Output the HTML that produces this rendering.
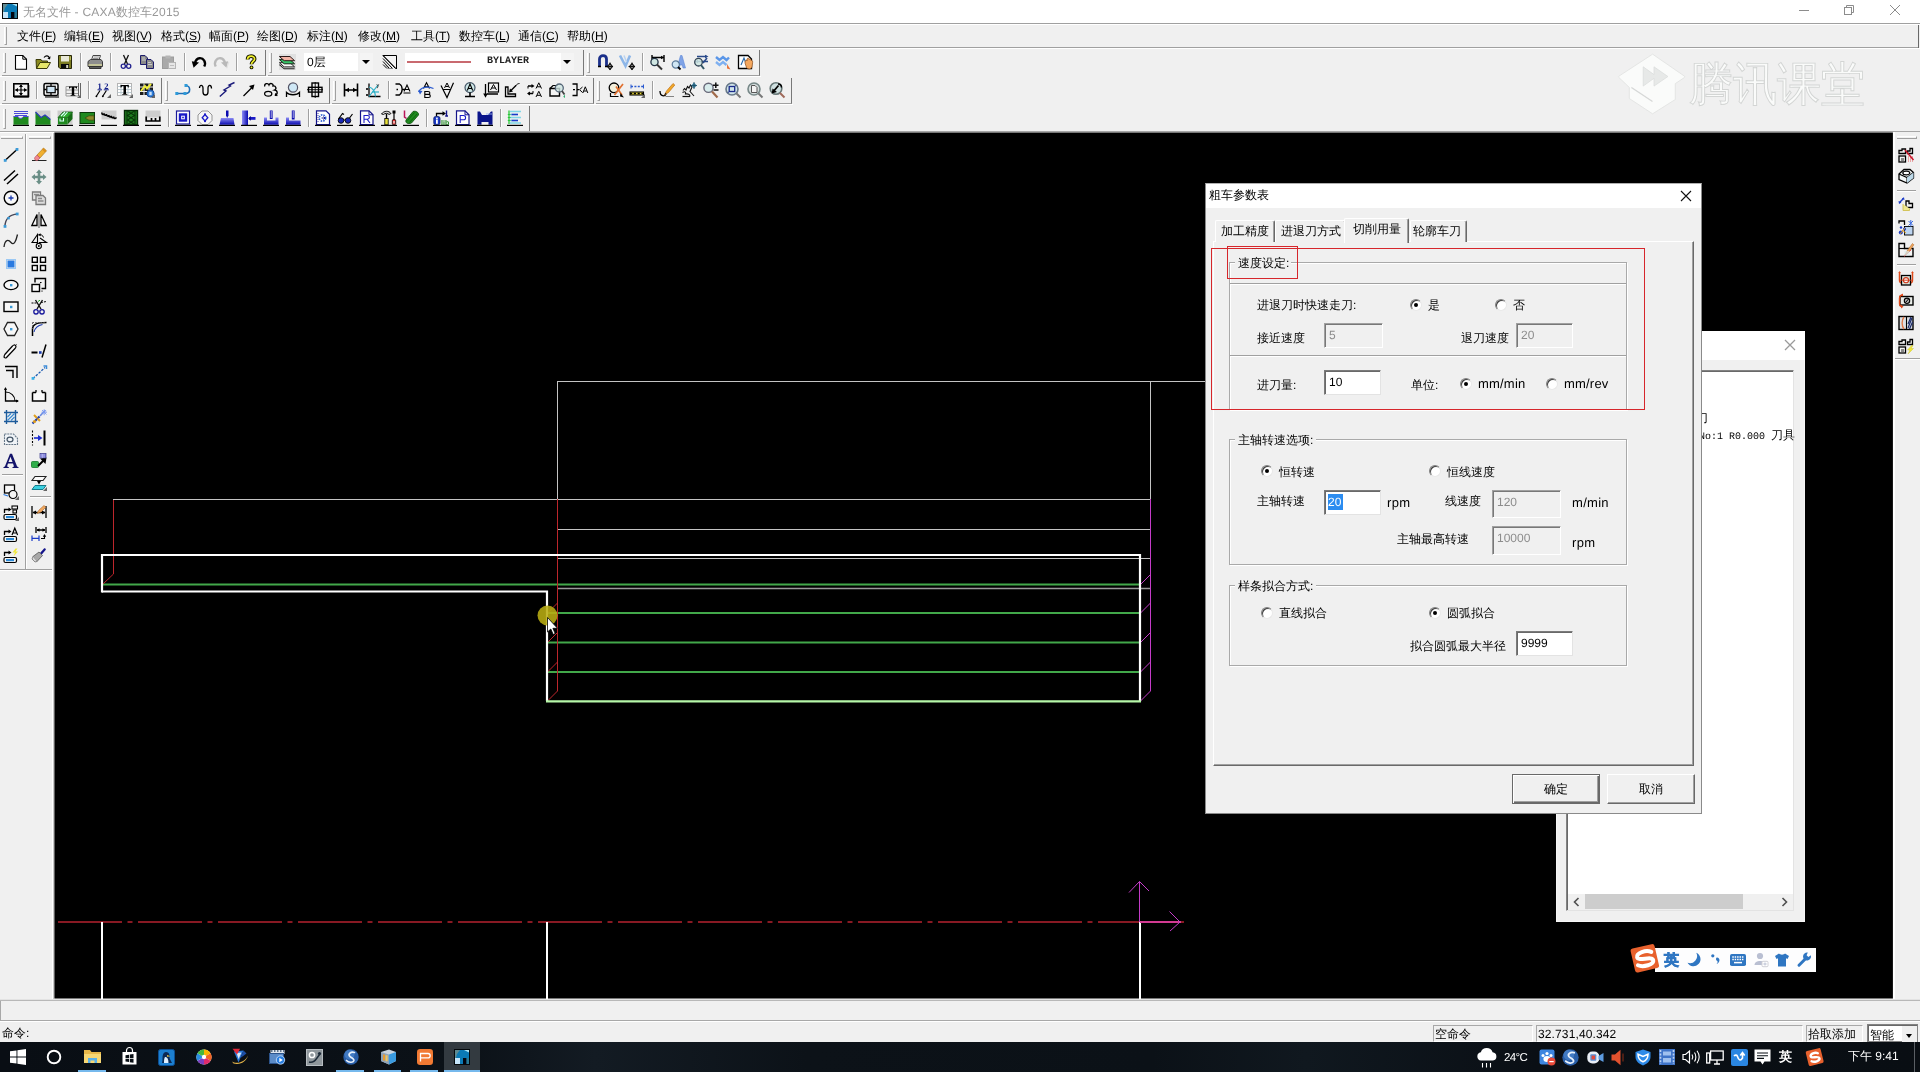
<!DOCTYPE html>
<html><head><meta charset="utf-8"><title>CAXA</title><style>
*{box-sizing:border-box;margin:0;padding:0}
html,body{width:1920px;height:1072px;overflow:hidden;background:#f0f0f0;font-family:"Liberation Sans",sans-serif;font-size:12px;color:#000;line-height:1}
body{position:relative;-webkit-font-smoothing:antialiased;text-rendering:geometricPrecision}
#root{position:absolute;left:0;top:0;width:1920px;height:1072px;will-change:transform}
.a{position:absolute}
.t{position:absolute;white-space:nowrap;line-height:12px;font-size:12px}
svg{position:absolute;overflow:visible}
.ic{position:absolute;width:16px;height:16px}
.vs{position:absolute;width:2px;border-left:1px solid #a0a0a0;border-right:1px solid #fff}
.hs{position:absolute;height:2px;border-top:1px solid #a0a0a0;border-bottom:1px solid #fff}
.grip{position:absolute;width:3px;border-left:1px solid #fff;border-right:1px solid #a0a0a0;border-bottom:1px solid #a0a0a0}
.gripH{position:absolute;height:3px;border-top:1px solid #fff;border-bottom:1px solid #a0a0a0;border-right:1px solid #a0a0a0}
.u{text-decoration:underline}
i{display:inline-block;width:1em;text-align:center;font-style:normal;line-height:inherit}
.edit{position:absolute;background:#fff;border:1px solid #7a7a7a;border-right-color:#e3e3e3;border-bottom-color:#e3e3e3;box-shadow:inset 1px 1px 0 #696969}
.edit.dis{background:#f0f0f0;border-color:#a0a0a0 #fff #fff #a0a0a0;box-shadow:inset 1px 1px 0 #787878}
.grp{position:absolute;border:1px solid #a9a9a9;box-shadow:inset 1px 1px 0 #fff,1px 1px 0 #fff}
.rad{position:absolute;width:12px;height:12px;border-radius:50%;background:#fff;border:1px solid #808080;border-right-color:#e8e8e8;border-bottom-color:#e8e8e8;box-shadow:inset 1px 1px 0 #404040}
.rad.on:after{content:"";position:absolute;left:3px;top:3px;width:4px;height:4px;border-radius:50%;background:#000}
.btn{position:absolute;background:#f0f0f0;border:1px solid #fff;border-right-color:#696969;border-bottom-color:#696969;box-shadow:inset -1px -1px 0 #a0a0a0;text-align:center;font-size:12px}
</style></head><body><div id="root">
<div class="a" style="left:0;top:0;width:1920px;height:24px;background:#fff"></div>
<svg style="left:2px;top:3px" width="16" height="16" viewBox="0 0 16 16"><rect x="0" y="0" width="16" height="16" fill="#05090c"/><rect x="1" y="1" width="14" height="14" fill="#0a7ab6"/><path d="M1 1H6L3 5L2 9H1Z" fill="#5f8a92"/><path d="M10 1H15V3.5Z" fill="#a8e4f6"/><rect x="1" y="9" width="5" height="6" fill="#c6e6fb"/><rect x="9" y="9" width="3.6" height="6" fill="#03060f"/><rect x="12.6" y="9" width="2.4" height="6" fill="#2a7a96"/></svg>
<div class="t" style="left:23px;top:6px;color:#999;letter-spacing:0.25px"><i>无</i><i>名</i><i>文</i><i>件</i> - CAXA<i>数</i><i>控</i><i>车</i>2015</div>
<div class="a" style="left:1799px;top:10px;width:10px;height:1px;background:#8c8c8c"></div>
<svg style="left:1844px;top:5px" width="10" height="10" viewBox="0 0 10 10" fill="none" stroke="#8c8c8c" stroke-width="1"><path d="M2.5 2.5V0.5H9.5V7.5H7.5"/><rect x="0.5" y="2.5" width="7" height="7"/></svg>
<svg style="left:1890px;top:5px" width="10" height="10" viewBox="0 0 10 10" fill="none" stroke="#8c8c8c" stroke-width="1"><path d="M0 0L10 10M10 0L0 10"/></svg>
<div class="a" style="left:0;top:23px;width:1920px;height:1px;background:#a0a0a0"></div>
<div class="a" style="left:0;top:24px;width:1920px;height:1px;background:#fff"></div>
<div class="a" style="left:0;top:47px;width:1918px;height:1px;background:#a0a0a0"></div>
<div class="a" style="left:0;top:48px;width:1920px;height:1px;background:#fff"></div>
<div class="a" style="left:1918px;top:25px;width:1px;height:23px;background:#696969"></div>
<div class="grip" style="left:4px;top:27px;height:18px"></div>
<div class="t" style="left:17px;top:30px"><i>文</i><i>件</i>(<span class="u">F</span>)</div>
<div class="t" style="left:64px;top:30px"><i>编</i><i>辑</i>(<span class="u">E</span>)</div>
<div class="t" style="left:112px;top:30px"><i>视</i><i>图</i>(<span class="u">V</span>)</div>
<div class="t" style="left:161px;top:30px"><i>格</i><i>式</i>(<span class="u">S</span>)</div>
<div class="t" style="left:209px;top:30px"><i>幅</i><i>面</i>(<span class="u">P</span>)</div>
<div class="t" style="left:257px;top:30px"><i>绘</i><i>图</i>(<span class="u">D</span>)</div>
<div class="t" style="left:307px;top:30px"><i>标</i><i>注</i>(<span class="u">N</span>)</div>
<div class="t" style="left:358px;top:30px"><i>修</i><i>改</i>(<span class="u">M</span>)</div>
<div class="t" style="left:411px;top:30px"><i>工</i><i>具</i>(<span class="u">T</span>)</div>
<div class="t" style="left:459px;top:30px"><i>数</i><i>控</i><i>车</i>(<span class="u">L</span>)</div>
<div class="t" style="left:518px;top:30px"><i>通</i><i>信</i>(<span class="u">C</span>)</div>
<div class="t" style="left:567px;top:30px"><i>帮</i><i>助</i>(<span class="u">H</span>)</div>
<div class="a" style="left:0;top:76px;width:761px;height:1px;background:#fff"></div>
<div class="a" style="left:0;top:104px;width:793px;height:1px;background:#fff"></div>
<div class="a" style="left:2px;top:50px;width:264px;height:26px;border-right:1px solid #787878;border-bottom:1px solid #a0a0a0"></div>
<div class="grip" style="left:3px;top:53px;height:20px"></div>
<div class="a" style="left:268px;top:50px;width:316px;height:26px;border-right:1px solid #787878;border-bottom:1px solid #a0a0a0"></div>
<div class="grip" style="left:269px;top:53px;height:20px"></div>
<div class="a" style="left:586px;top:50px;width:174px;height:26px;border-right:1px solid #787878;border-bottom:1px solid #a0a0a0"></div>
<div class="grip" style="left:587px;top:53px;height:20px"></div>
<div class="a" style="left:2px;top:78px;width:160px;height:26px;border-right:1px solid #787878;border-bottom:1px solid #a0a0a0"></div>
<div class="grip" style="left:3px;top:81px;height:20px"></div>
<div class="a" style="left:164px;top:78px;width:166px;height:26px;border-right:1px solid #787878;border-bottom:1px solid #a0a0a0"></div>
<div class="grip" style="left:165px;top:81px;height:20px"></div>
<div class="a" style="left:332px;top:78px;width:262px;height:26px;border-right:1px solid #787878;border-bottom:1px solid #a0a0a0"></div>
<div class="grip" style="left:333px;top:81px;height:20px"></div>
<div class="a" style="left:596px;top:78px;width:196px;height:26px;border-right:1px solid #787878;border-bottom:1px solid #a0a0a0"></div>
<div class="grip" style="left:597px;top:81px;height:20px"></div>
<div class="a" style="left:2px;top:106px;width:528px;height:26px;border-right:1px solid #787878;border-bottom:1px solid #a0a0a0"></div>
<div class="grip" style="left:3px;top:109px;height:20px"></div>
<div class="vs" style="left:80px;top:53px;height:18px"></div>
<div class="vs" style="left:110px;top:53px;height:18px"></div>
<div class="vs" style="left:184px;top:53px;height:18px"></div>
<div class="vs" style="left:236px;top:53px;height:18px"></div>
<div class="vs" style="left:642px;top:53px;height:18px"></div>
<div class="vs" style="left:36px;top:81px;height:18px"></div>
<div class="vs" style="left:88px;top:81px;height:18px"></div>
<div class="vs" style="left:388px;top:81px;height:18px"></div>
<div class="vs" style="left:652px;top:81px;height:18px"></div>
<div class="vs" style="left:168px;top:109px;height:18px"></div>
<div class="vs" style="left:308px;top:109px;height:18px"></div>
<div class="vs" style="left:426px;top:109px;height:18px"></div>
<div class="vs" style="left:500px;top:109px;height:18px"></div>
<div class="a" style="left:279px;top:54px;width:17px;height:16px;background:#e0e0e0"></div>
<div class="a" style="left:304px;top:53px;width:54px;height:18px;background:#fff"></div>
<div class="t" style="left:307px;top:56px;">0<i>层</i></div>
<div class="a" style="left:360px;top:53px;width:13px;height:18px;background:#f4f4f4"></div>
<div class="a" style="left:362px;top:60px;width:0;height:0;border-left:4px solid transparent;border-right:4px solid transparent;border-top:4px solid #000"></div>
<div class="a" style="left:405px;top:53px;width:156px;height:18px;background:#fff"></div>
<div class="a" style="left:407px;top:61px;width:64px;height:1.5px;background:#c9696f"></div>
<div class="t" style="left:487px;top:56px;font-family:'Liberation Mono',monospace;font-size:10px;line-height:12px;font-weight:bold;color:#222">BYLAYER</div>
<div class="a" style="left:561px;top:53px;width:13px;height:18px;background:#f4f4f4"></div>
<div class="a" style="left:563px;top:60px;width:0;height:0;border-left:4px solid transparent;border-right:4px solid transparent;border-top:4px solid #000"></div>
<div class="a" style="left:0;top:131px;width:1920px;height:1px;background:#a6a6a6"></div>
<div class="a" style="left:0;top:132px;width:54px;height:1px;background:#fff"></div>
<div class="gripH" style="left:1px;top:136px;width:22px"></div>
<div class="gripH" style="left:29px;top:136px;width:22px"></div>
<div class="vs" style="left:25px;top:134px;height:436px"></div>
<div class="a" style="left:0;top:569px;width:53px;height:1px;background:#a0a0a0"></div>
<div class="a" style="left:0;top:570px;width:53px;height:1px;background:#fff"></div>
<div class="a" style="left:52px;top:133px;width:1px;height:866px;background:#fff"></div>
<div class="a" style="left:53px;top:133px;width:1px;height:866px;background:#c8c8c8"></div>
<div class="hs" style="left:2px;top:474px;width:21px"></div>
<div class="hs" style="left:30px;top:496px;width:21px"></div>
<div class="a" style="left:1893px;top:132px;width:2px;height:867px;background:#fff"></div>
<div class="gripH" style="left:1897px;top:136px;width:20px"></div>
<div class="hs" style="left:1897px;top:190px;width:19px"></div>
<div class="hs" style="left:1897px;top:264px;width:19px"></div>
<div class="a" style="left:1895px;top:358px;width:25px;height:1px;background:#a0a0a0"></div>
<div class="a" style="left:1895px;top:359px;width:25px;height:1px;background:#fff"></div>
<svg style="left:1610px;top:48px" width="90" height="72" viewBox="1610 48 90 72"><path d="M1652.6 54.2L1684.5 76.2Q1685.3 76.9 1684.3 77.6L1675.3 83.6V99.5L1652.6 113.8L1629.3 98.5V87.4L1618.9 77.5Q1618 76.8 1619 76.1Z" fill="#fafbfa" stroke="#dfe1df" stroke-width="0.8" stroke-linejoin="round"/><path d="M1643.2 66.8V86.1L1654 78.3V86.1L1667.9 76.5L1654 66.8V74.6Z" fill="#e7e9e8" stroke="#d9dbda" stroke-width="0.7"/><path d="M1631.5 87.3L1652.6 101.4" stroke="#d6d8d7" stroke-width="1.6"/><path d="M1631.9 86.6L1653 100.7" stroke="#fff" stroke-width="0.6"/></svg>
<div class="t" style="left:1689px;top:58px;font-size:44px;line-height:52px;letter-spacing:0.6px;font-weight:300;color:#fafbfa;-webkit-text-stroke:0.9px #d3d5d4;transform:scaleY(1.06);transform-origin:0 0"><i>腾</i><i>讯</i><i>课</i><i>堂</i></div>
<svg class="ic" style="left:13.0px;top:54.3px" viewBox="0 0 16 16"><path d="M2.5 1.5H9.8L13.5 5.2V15.2H2.5Z" fill="#fff" stroke="#000" stroke-width="1.1"/><path d="M9.8 1.5V5.2H13.5" fill="none" stroke="#000" stroke-width="1"/></svg>
<svg class="ic" style="left:34.5px;top:54.3px" viewBox="0 0 16 16"><path d="M1 5.5H6L7 7H12.5V9H5L1.5 14.5Z" fill="#8a8a1e" stroke="#3a3a08"/><path d="M1.5 14.5L5 8.5H15.5L12 14.5Z" fill="#e6e66a" stroke="#3a3a08"/><path d="M9 3.5C11 1 13.5 1.5 14.5 4" fill="none" stroke="#000" stroke-width="1.2"/><path d="M15.6 2.2L15 5.6L12.4 4.4Z" fill="#000"/></svg>
<svg class="ic" style="left:57.0px;top:54.3px" viewBox="0 0 16 16"><path d="M1.5 1.5H14.5V14.5H3L1.5 13Z" fill="#7d7d22" stroke="#26260a"/><rect x="4" y="2" width="8" height="5.5" fill="#e9e9d8"/><rect x="4" y="10" width="8" height="4.5" fill="#0a0a0a"/><rect x="9.2" y="11" width="2" height="3" fill="#d8d8c0"/><path d="M13.3 2.5V6" stroke="#c8c86a"/></svg>
<svg class="ic" style="left:87.0px;top:54.3px" viewBox="0 0 16 16"><path d="M4.5 6L6 1.5H13.5L12 6Z" fill="#fff" stroke="#444"/><path d="M1 7.5L3.5 5.5H14L15.5 7.5V12.5H1Z" fill="#8d8d8d" stroke="#3a3a3a"/><path d="M1.5 11H15" stroke="#e8e8a0" stroke-width="1.2"/><path d="M2.5 12.5H14V14.5H2.5Z" fill="#5a5a5a" stroke="#333"/><path d="M6.5 3H12M6 4.5H11.5" stroke="#777" stroke-width="0.8"/></svg>
<svg class="ic" style="left:117.5px;top:54.3px" viewBox="0 0 16 16"><path d="M5.5 1L9.5 10M10.5 1L6.5 10" stroke="#111" stroke-width="1.3" fill="none"/><circle cx="5.3" cy="12.3" r="2.1" fill="none" stroke="#22228e" stroke-width="1.3"/><circle cx="10.7" cy="12.3" r="2.1" fill="none" stroke="#22228e" stroke-width="1.3"/></svg>
<svg class="ic" style="left:138.5px;top:54.3px" viewBox="0 0 16 16"><path d="M1.5 1.5H6L8.5 4V10.5H1.5Z" fill="#8a8a8a" stroke="#1c1c6a"/><path d="M7.5 5.5H12L14.5 8V14.5H7.5Z" fill="#8a8a8a" stroke="#1c1c6a"/><path d="M3 4H6M3 6H7M9 8.5H12M9 10.5H13" stroke="#d8d8d8" stroke-width="0.8"/></svg>
<svg class="ic" style="left:161.0px;top:54.3px" viewBox="0 0 16 16"><rect x="1.5" y="3" width="11" height="11.5" fill="#a9a9a9" stroke="#9c9c9c"/><rect x="4.5" y="1.5" width="5" height="3" fill="#b5b5b5"/><rect x="7.5" y="8.5" width="7" height="6" fill="#e6e6e6" stroke="#b4b4b4"/><path d="M9 11.5H13" stroke="#bdbdbd"/></svg>
<svg class="ic" style="left:191.0px;top:54.3px" viewBox="0 0 16 16"><path d="M13.2 12.5C15.5 8 12.5 3.8 8.5 4.2C6 4.5 4.5 6.5 4 9" fill="none" stroke="#000" stroke-width="2.4"/><path d="M0.8 7.2L8 8.6L2.6 13.8Z" fill="#000"/></svg>
<svg class="ic" style="left:213.0px;top:54.3px" viewBox="0 0 16 16"><path d="M2.8 12.5C0.5 8 3.5 3.8 7.5 4.2C10 4.5 11.5 6.5 12 9" fill="none" stroke="#b9b9b9" stroke-width="2.4"/><path d="M15.2 7.2L8 8.6L13.4 13.8Z" fill="#b9b9b9"/><path d="M13.8 14.3L15.8 8" stroke="#dedede" stroke-width="0.9"/></svg>
<svg class="ic" style="left:243.0px;top:54.3px" viewBox="0 0 16 16"><path d="M4.6 5.4C4.6 1.2 11.6 1.2 11.6 4.9C11.6 7.4 8.5 7.4 8.5 10.2" fill="none" stroke="#1a1a00" stroke-width="3.8"/><path d="M4.6 5.4C4.6 1.2 11.6 1.2 11.6 4.9C11.6 7.4 8.5 7.4 8.5 10.2" fill="none" stroke="#f0f02a" stroke-width="1.7"/><circle cx="8.5" cy="13.4" r="1.9" fill="#1a1a00"/><circle cx="8.5" cy="13.4" r="0.9" fill="#f0f02a"/></svg>
<svg class="ic" style="left:279.0px;top:54.3px" viewBox="0 0 16 16"><path d="M0.4 10.6L5.2 14.8H15.6" fill="none" stroke="#222" stroke-width="1.1"/><path d="M0.4 8.7H11L15.6 12.9H5.2Z" fill="#fafafa" stroke="#222" stroke-width="1"/><path d="M0.4 5.6H11L15.6 9.8H5.2Z" fill="#35c468" stroke="#1a2a1a" stroke-width="1"/><path d="M0.4 2.5H11L15.6 6.7H5.2Z" fill="#f3b4a6" stroke="#2a1a1a" stroke-width="1"/></svg>
<svg class="ic" style="left:381.5px;top:54.3px" viewBox="0 0 16 16"><path d="M1 1.5H14.5V15L1 1.5Z" fill="#f4f4f4" stroke="#000"/><path d="M1 1.5L13.5 14.5M1 4.5L10.5 14.5M1 7.5L7.5 14.5M1 10.5L5 14.5" stroke="#000" stroke-width="1"/><path d="M3 11.5L6 14.5H10" stroke="#888" fill="none"/></svg>
<svg class="ic" style="left:597.0px;top:54.3px" viewBox="0 0 16 16"><path d="M2.5 12V5C2.5 0.5 9.5 0.5 9.5 5V12" fill="none" stroke="#1a2f8a" stroke-width="2.8"/><path d="M1 12.5H4M8 12.5H11" stroke="#000" stroke-width="1.3"/><path d="M13 9.5L15.5 12.5L13 15.5L10.5 12.5Z" fill="none" stroke="#000" stroke-width="1.1"/><path d="M13 8.5V16M9.5 12.5H16" stroke="#000" stroke-width="0.9"/></svg>
<svg class="ic" style="left:619.0px;top:54.3px" viewBox="0 0 16 16"><path d="M1 1.5L6.5 12L11 1.5" fill="none" stroke="#8db6e8" stroke-width="2.6"/><path d="M5 1.5L7.5 8" stroke="#b9d3f2" stroke-width="1.5"/><path d="M13 9.5L15.5 12.5L13 15.5L10.5 12.5Z" fill="none" stroke="#000" stroke-width="1.1"/><path d="M13 8.5V16M9.5 12.5H16" stroke="#000" stroke-width="0.9"/></svg>
<svg class="ic" style="left:649.0px;top:54.3px" viewBox="0 0 16 16"><path d="M3 1V6.5M15 1V8M3 3.5H15" stroke="#000" stroke-width="1.4" fill="none"/><path d="M12 1.8L15 3.5L12 5.2Z" fill="#000"/><circle cx="5.5" cy="8" r="3.6" fill="#cfe6e2" stroke="#234" stroke-width="1.3"/><path d="M8 10.5L13 15.5" stroke="#333" stroke-width="2"/></svg>
<svg class="ic" style="left:671.0px;top:54.3px" viewBox="0 0 16 16"><path d="M6 14L9.5 1.5H11L14.5 14H12L11.3 11H8.8L8.2 14Z" fill="#7fa3e6" stroke="#5c86d6" stroke-width="0.6"/><circle cx="4.8" cy="10.5" r="3.6" fill="#cfe6f4" stroke="#5a7a9a" stroke-width="1.2"/><path d="M7 13L9.5 15.5" stroke="#000" stroke-width="1.8"/></svg>
<svg class="ic" style="left:693.0px;top:54.3px" viewBox="0 0 16 16"><path d="M4 2.5H14M4 7.5H15" stroke="#2a4a8a" stroke-width="1.3"/><path d="M12 0.8L15.5 2.5L12 4.2ZM5 5.8L1.5 7.5L5 9.2Z" fill="#2a4a8a"/><circle cx="5.5" cy="8.2" r="3.8" fill="#cfe6e2" fill-opacity="0.85" stroke="#345" stroke-width="1.3"/><path d="M8 11L11 15" stroke="#356" stroke-width="2"/><path d="M10 9L14 4" stroke="#2a4a8a" stroke-width="1.6"/></svg>
<svg class="ic" style="left:715.0px;top:54.3px" viewBox="0 0 16 16"><path d="M1 3L4.5 6L8 3L11.5 6L14 3.5" fill="none" stroke="#5a96e8" stroke-width="2.4"/><path d="M1 8L4.5 11L8 8L11.5 11" fill="none" stroke="#7fb0f0" stroke-width="2.4"/><path d="M12 10L15.5 15.5L12 14.5Z" fill="#e8743a"/></svg>
<svg class="ic" style="left:737.0px;top:54.3px" viewBox="0 0 16 16"><path d="M1.5 1.5H11L14.5 5V14.5H1.5Z" fill="#fff" stroke="#000" stroke-width="1.3"/><path d="M4 11L7 4L8.5 8" fill="none" stroke="#26a" stroke-width="1.1"/><path d="M8 9C8 6 9.5 5.5 10 7V5C10.8 3.5 12 4 12 5.5C13 4.5 14 5 14 6.5C15 6 15.8 7 15.6 8.5L15 13C14.5 15.5 10.5 15.5 9.5 13.5Z" fill="#f4a860" stroke="#8a4a1a" stroke-width="0.7"/></svg>
<svg class="ic" style="left:13.0px;top:82.0px" viewBox="0 0 16 16"><rect x="0.8" y="1.8" width="14.4" height="12.4" fill="#f4f4f4" stroke="#000" stroke-width="1.6"/><path d="M0.8 15.2H15.8V3" stroke="#000" stroke-width="1" fill="none"/><path d="M8 3V13M2.5 8H13.5" stroke="#000" stroke-width="1.2"/><path d="M8 2.2L10 5H6ZM8 13.8L10 11H6ZM1.8 8L5 6V10ZM14.2 8L11 6V10Z" fill="#000"/></svg>
<svg class="ic" style="left:43.0px;top:82.0px" viewBox="0 0 16 16"><rect x="1" y="1.5" width="14" height="12" rx="1.5" fill="#f4f4f4" stroke="#000" stroke-width="1.5"/><rect x="3.8" y="4.3" width="8.4" height="6.4" fill="#cfe4f2" stroke="#000" stroke-width="1.2"/><path d="M8 1.5V4M8 11V13.5M1 7.5H3.5M12.5 7.5H15" stroke="#000" stroke-width="1.3"/><path d="M2 15H14" stroke="#000"/><path d="M16 12V16H12Z" fill="#666"/></svg>
<svg class="ic" style="left:65.0px;top:82.0px" viewBox="0 0 16 16"><path d="M1 4.5H13M1 8H13M1 11.5H13M1 14H13M1 4.5V14" stroke="#9a9a9a" stroke-width="1"/><path d="M13.5 1V14M15.5 1V13" stroke="#555" stroke-width="0.9"/><path d="M4 4.5H12V6.6H11.2C11 5.6 10.5 5.4 9.2 5.4V12.4C9.2 12.9 9.6 13 10.4 13V13.8H5.6V13C6.4 13 6.8 12.9 6.8 12.4V5.4C5.5 5.4 5 5.6 4.8 6.6H4Z" fill="#000"/><path d="M16 12V16H12Z" fill="#666"/></svg>
<svg class="ic" style="left:95.0px;top:82.0px" viewBox="0 0 16 16"><text x="2.6" y="6.6" font-family="Liberation Serif" font-weight="bold" font-size="8.5" fill="#14208a">1</text><text x="9.2" y="6.6" font-family="Liberation Serif" font-weight="bold" font-size="8.5" fill="#14208a">2</text><path d="M2.5 7.8H7M8.8 7.8H13.8" stroke="#14208a" stroke-width="1"/><path d="M1.2 14.5L5 8.5M7.6 14.5L11.4 8.5" stroke="#000" stroke-width="1.2"/><circle cx="1.4" cy="14.3" r="0.9" fill="#000"/><circle cx="7.8" cy="14.3" r="0.9" fill="#000"/><path d="M16 12V16H12Z" fill="#666"/></svg>
<svg class="ic" style="left:117.0px;top:82.0px" viewBox="0 0 16 16"><rect x="0.5" y="1.5" width="14" height="12" fill="#fff" stroke="#b4b4b4"/><path d="M0.5 4.5H14.5M0.5 7.5H14.5M0.5 10.5H14.5M4 1.5V13.5M11 1.5V13.5" stroke="#b4c4cc" stroke-width="0.9"/><path d="M3.5 3H11.8V5.4H11C10.8 4.2 10.3 4 9 4V11.2C9 11.8 9.4 11.9 10.3 11.9V12.8H5.2V11.9C6 11.9 6.5 11.8 6.5 11.2V4C5.2 4 4.6 4.2 4.4 5.4H3.5Z" fill="#000"/><path d="M16 12V16H12Z" fill="#666"/></svg>
<svg class="ic" style="left:139.0px;top:82.0px" viewBox="0 0 16 16"><rect x="1" y="1.5" width="13" height="11.5" fill="#1a1a1a"/><path d="M1 5H14M1 9.5H14M5 1.5V13M10 1.5V13" stroke="#f0f0f0" stroke-width="1"/><path d="M2 9L6 4L8 6.5L12 1.8" fill="none" stroke="#f0ee3a" stroke-width="2"/><circle cx="11.5" cy="11.5" r="3.6" fill="#2f7fd8" stroke="#14489a"/><rect x="10.3" y="9.8" width="2.4" height="3.4" fill="#cfe2f8"/><path d="M16 12V16H12Z" fill="#666"/></svg>
<svg class="ic" style="left:175.0px;top:82.0px" viewBox="0 0 16 16"><path d="M1.5 11.5H10.5C16 11.5 16 3.5 10.5 3.5" fill="none" stroke="#1c6fb8" stroke-width="1.6"/><rect x="0.3" y="10" width="3" height="3" fill="#2f9ad8"/><rect x="8.5" y="10" width="3" height="3" fill="#2f9ad8"/><rect x="9.5" y="2" width="3" height="3" fill="#2f9ad8"/></svg>
<svg class="ic" style="left:197.5px;top:82.0px" viewBox="0 0 16 16"><path d="M1.5 6C1.5 2.5 5 2.5 5 6V10C5 14 10 14 10 10V6C10 2.5 13.5 2.5 13.5 6.5" fill="none" stroke="#000" stroke-width="1.3"/></svg>
<svg class="ic" style="left:219.0px;top:82.0px" viewBox="0 0 16 16"><path d="M0.8 14.5L7 9L5 8L11.5 4L10 3L15.5 0.5" fill="none" stroke="#1a1a7a" stroke-width="1.4"/></svg>
<svg class="ic" style="left:241.0px;top:82.0px" viewBox="0 0 16 16"><path d="M2.5 14L11 5.5" stroke="#000" stroke-width="1.3"/><path d="M13.5 2.5L12 8L8 4Z" fill="#000"/></svg>
<svg class="ic" style="left:263.0px;top:82.0px" viewBox="0 0 16 16"><path d="M1.8 4.5C1 1.5 5 0.5 6 3C7 0.5 10.5 1.5 10 4C13 3.5 14 7 11.5 8C15 8.5 15 12.5 12 13" fill="none" stroke="#000" stroke-width="1.3"/><ellipse cx="5.2" cy="11.8" rx="3.6" ry="2.4" fill="none" stroke="#000" stroke-width="1.3"/><path d="M13 11L12 13.5L14.5 13.6" fill="none" stroke="#000"/></svg>
<svg class="ic" style="left:285.0px;top:82.0px" viewBox="0 0 16 16"><circle cx="8" cy="5.5" r="4.6" fill="#cfe8f6" stroke="#556" stroke-width="1.2"/><path d="M1.5 15V10.5C4 13.5 12 13.5 14.5 10.5V15" fill="none" stroke="#000" stroke-width="1.3"/></svg>
<svg class="ic" style="left:307.0px;top:82.0px" viewBox="0 0 16 16"><rect x="5" y="1" width="6.5" height="13.5" fill="#f4f4f4" stroke="#000" stroke-width="1.4"/><rect x="1.5" y="5.3" width="13.5" height="4.8" fill="none" stroke="#000" stroke-width="1.4"/><path d="M0 7.7H16M8.2 0V16" stroke="#000" stroke-width="0.9"/></svg>
<svg class="ic" style="left:343.0px;top:82.0px" viewBox="0 0 16 16"><path d="M1.5 1.5V14.5M14.5 1.5V14.5M2 8H14" stroke="#000" stroke-width="1.6"/><path d="M2 8L6 5.8V10.2ZM14 8L10 5.8V10.2Z" fill="#000"/></svg>
<svg class="ic" style="left:365.0px;top:82.0px" viewBox="0 0 16 16"><path d="M4 1.5V14.5H15.5" fill="none" stroke="#000" stroke-width="1.3"/><path d="M4 14.5L13 3M4 5C8 6 10 9 10.5 14.5" fill="none" stroke="#2ab0c8" stroke-width="1.2"/><path d="M7 10H14" stroke="#2ab0c8" stroke-width="1.2"/><path d="M1 6L3 8M3 6L1 8M1 12L3 14M3 12L1 14" stroke="#000" stroke-width="0.8"/><text x="11.5" y="5" font-family="Liberation Sans" font-size="5.5" fill="#000">y</text></svg>
<svg class="ic" style="left:395.0px;top:82.0px" viewBox="0 0 16 16"><path d="M0.5 2H4.5C8 4 8 10.5 4.5 13H0.5M1.5 7.5H3M7.2 7.5H10" fill="none" stroke="#000" stroke-width="1.3"/><path d="M9 9.5L12 3L15 9.5M10 7.5H14M8.5 11H15.5" fill="none" stroke="#000" stroke-width="1.1"/></svg>
<svg class="ic" style="left:417.5px;top:82.0px" viewBox="0 0 16 16"><path d="M5.5 6.5L8.5 0.8L11.5 6.5M6.5 4.8H10.5" fill="none" stroke="#000" stroke-width="1.1"/><path d="M0.5 9.8C4 4.5 10 4.5 15.5 6.5" fill="none" stroke="#2a5ad0" stroke-width="1.3"/><path d="M0.2 8.5L4.5 9L2 12.5Z" fill="#2a5ad0"/><path d="M6.8 9H10C12.5 9 12.5 11.9 10 11.9H6.8ZM6.8 11.9H10.4C13 11.9 13 15 10.4 15H6.8Z" fill="none" stroke="#000" stroke-width="1.1" transform="translate(0 0.5)"/></svg>
<svg class="ic" style="left:440.0px;top:82.0px" viewBox="0 0 16 16"><path d="M1 3.5L7 15.5L13.5 0.8" fill="none" stroke="#000" stroke-width="1.2"/><path d="M3 7.5H11" stroke="#000" stroke-width="1"/><path d="M4.5 6L7 1L9.5 6M5.5 4.5H8.5" fill="none" stroke="#000" stroke-width="1"/></svg>
<svg class="ic" style="left:461.5px;top:82.0px" viewBox="0 0 16 16"><circle cx="8" cy="5.6" r="5" fill="#cfe8e8" stroke="#456" stroke-width="1.2"/><path d="M5.3 8.5L8 2L10.7 8.5M6.3 6.5H9.7" fill="none" stroke="#000" stroke-width="1.1"/><path d="M8 10.5V14M3 14.5H13" stroke="#000" stroke-width="1.6"/></svg>
<svg class="ic" style="left:483.0px;top:82.0px" viewBox="0 0 16 16"><rect x="5.5" y="1" width="10" height="9" fill="#f4f4f4" stroke="#000" stroke-width="1.2"/><path d="M7.5 8L10.5 2.5L13.5 8M8.5 6H12.5" fill="none" stroke="#000" stroke-width="1"/><path d="M2.5 2V13M4 12H15" stroke="#000" stroke-width="1.3" fill="none"/><path d="M2.5 15.8L0.2 11.5H4.8Z" fill="#000"/></svg>
<svg class="ic" style="left:504.0px;top:82.0px" viewBox="0 0 16 16"><path d="M1.5 5V14.5H11.5V12H4V5Z" fill="#f4f4f4" stroke="#000" stroke-width="1.3"/><path d="M6 9.5L12 3.5" stroke="#000" stroke-width="1.3"/><path d="M5 10.5L6 6.5L9 9.5Z" fill="#000"/><path d="M11.5 4C12.5 2.5 14 1.5 15.5 1.5" fill="none" stroke="#000" stroke-width="1"/></svg>
<svg class="ic" style="left:527.0px;top:82.0px" viewBox="0 0 16 16"><path d="M1 4H6M1 11.5H6" stroke="#000" stroke-width="1.3"/><path d="M7.5 4L4.5 2V6ZM0 11.5L3 9.5V13.5Z" fill="#000"/><path d="M1 4V6.5M6 11.5V9" stroke="#000"/><path d="M9 6.5L11.8 0.8L14.5 6.5M10 4.8H13.6M9 15L11.8 9.3L14.5 15M10 13.3H13.6" fill="none" stroke="#000" stroke-width="1"/></svg>
<svg class="ic" style="left:549.0px;top:82.0px" viewBox="0 0 16 16"><path d="M1 6.5H10.5V14H1Z" fill="#f4f4f4" stroke="#000" stroke-width="1.4"/><path d="M1 6.5L4 3.5H9" fill="none" stroke="#000" stroke-width="1.2"/><circle cx="10.3" cy="6" r="4" fill="#cfe6e2" fill-opacity="0.8" stroke="#567" stroke-width="1.3"/><path d="M13 9L15.5 12.5" stroke="#444" stroke-width="1.8"/><path d="M14.3 14.7L15.9 12.6L16 16Z" fill="#2a6"/></svg>
<svg class="ic" style="left:571.5px;top:82.0px" viewBox="0 0 16 16"><path d="M0.5 2H5V13.5H0.5M1 7.7H3M5.5 7.7H7" fill="none" stroke="#000" stroke-width="1.3"/><path d="M10.5 5L7.5 7.7L10.5 10.5" fill="none" stroke="#000" stroke-width="1"/><path d="M10.8 11L13.3 4.8L15.8 11M11.8 9H14.8" fill="none" stroke="#000" stroke-width="1"/></svg>
<svg class="ic" style="left:607.5px;top:82.0px" viewBox="0 0 16 16"><circle cx="6" cy="5.8" r="4.8" fill="#f4f0dc" stroke="#000" stroke-width="1.3"/><path d="M2.5 11V14.5H10.5" fill="none" stroke="#000" stroke-width="1.2"/><path d="M6.5 13L15 2M8 4.5L14 13" stroke="#e07030" stroke-width="1.7"/><path d="M12.5 11L16 15.5L12 14.5Z" fill="#000"/></svg>
<svg class="ic" style="left:629.0px;top:82.0px" viewBox="0 0 16 16"><path d="M2 4.5H14.5" stroke="#2a5ad0" stroke-width="1.3" stroke-dasharray="2 1.4"/><path d="M2 2.5V6.5M14.5 2.5V6.5" stroke="#2a5ad0"/><rect x="1" y="10" width="13.5" height="3" fill="#e8d83a" stroke="#000" stroke-width="1.1"/><path d="M1 11.5H14.5" stroke="#000" stroke-width="1.6" stroke-dasharray="2.2 1.6"/><path d="M16 12V16H12Z" fill="#666"/></svg>
<svg class="ic" style="left:659.0px;top:82.0px" viewBox="0 0 16 16"><path d="M1 9C1 15 6 14.5 7 12" fill="none" stroke="#000" stroke-width="1.3"/><path d="M5.5 13L7.5 9L14 1.5L15.8 3L9.5 10.5Z" fill="#f0a828" stroke="#c0701a" stroke-width="0.7"/><path d="M5.5 13L6.3 10.8L7.8 12Z" fill="#222"/><path d="M6.5 14.5H15" stroke="#777" stroke-width="0.9"/></svg>
<svg class="ic" style="left:681.0px;top:82.0px" viewBox="0 0 16 16"><path d="M2 8.5L3.5 6.5L5 8L6.5 4.5L8 6L9.5 3L11 5L9 9.5L13 14M1.5 10.5C4 9 5 10 4.5 12C7 11.5 9 12.5 9 14.5" fill="none" stroke="#111" stroke-width="1.1"/><path d="M1.5 14.5H9" stroke="#111" stroke-width="1.2"/><path d="M13 0.5L15.8 3.5L13 6.5L10.2 3.5Z" fill="#3f86a8"/><path d="M13 0V7M9.5 3.5H16" stroke="#1c4a5e" stroke-width="0.8"/></svg>
<svg class="ic" style="left:703.0px;top:82.0px" viewBox="0 0 16 16"><circle cx="5.5" cy="5.8" r="4.6" fill="#d8ecec" stroke="#667" stroke-width="1.4"/><path d="M9 9.5L14.5 15.5" stroke="#a06a4a" stroke-width="2.2"/><path d="M10 3.2H15.5M12.8 0.5V6M10.5 8H15.5" stroke="#111" stroke-width="1.5"/></svg>
<svg class="ic" style="left:725.0px;top:82.0px" viewBox="0 0 16 16"><circle cx="7" cy="7" r="6" fill="#d0e4e8" stroke="#678" stroke-width="1.6"/><rect x="4.2" y="4.5" width="5.5" height="5" fill="none" stroke="#1a2a8a" stroke-width="1.3"/><path d="M9.7 4.5L11 3.2M4.2 9.5L3 10.8" stroke="#1a2a8a"/><path d="M11.5 11.5L15.5 15.5" stroke="#777" stroke-width="2"/></svg>
<svg class="ic" style="left:747.0px;top:82.0px" viewBox="0 0 16 16"><circle cx="7" cy="7" r="6" fill="#d4dcdc" stroke="#788" stroke-width="1.6"/><path d="M4.5 3.5H8L10 5.5V10.5H4.5Z" fill="#f2f2f2" stroke="#555" stroke-width="1"/><path d="M11.5 11.5L15.5 15.5" stroke="#777" stroke-width="2"/></svg>
<svg class="ic" style="left:769.0px;top:82.0px" viewBox="0 0 16 16"><circle cx="7" cy="6.5" r="5.8" fill="#cfe0e0" stroke="#677" stroke-width="1.6"/><path d="M3.5 10.5L9.5 3.5" stroke="#000" stroke-width="1.8"/><path d="M2.8 11.5L3.5 6.5L8 10Z" fill="#000"/><path d="M9 2C11 2 12.5 3.5 12.5 5.5" fill="none" stroke="#000" stroke-width="1.4"/><path d="M11 11L15.5 15.5" stroke="#a06a5a" stroke-width="2"/></svg>
<svg class="ic" style="left:13.0px;top:110.0px" viewBox="0 0 16 16"><path d="M1 1.5H15M1 3.5H15M2 5.5H14" stroke="#4a4ad8" stroke-width="1.2"/><path d="M0.5 6.5H5C6 9 9 9 10.5 6.5H15.5V14.8H0.5Z" fill="#1f8a1f"/><path d="M0.5 6.5H5C6 9 9 9 10.5 6.5H15.5" fill="none" stroke="#4a4ad8"/><path d="M0 15.4H16" stroke="#000" stroke-width="1.2"/></svg>
<svg class="ic" style="left:35.0px;top:110.0px" viewBox="0 0 16 16"><rect x="0.5" y="0.5" width="15" height="8" fill="#cdcdcd"/><path d="M0.5 2L6 7.5L10 5L15.5 9.5V14.8H0.5Z" fill="#1f8a1f"/><path d="M0.5 2L6 7.5L10 5L15.5 9.5" fill="none" stroke="#2a3ab8" stroke-width="1.2"/><path d="M0 15.4H16" stroke="#000" stroke-width="1.2"/></svg>
<svg class="ic" style="left:57.0px;top:110.0px" viewBox="0 0 16 16"><rect x="0.5" y="0.5" width="15" height="14" fill="#cdcdcd"/><path d="M1 7.5L6 2H15.5L10.5 7.5Z" fill="#2aa82a" stroke="#0a4a0a" stroke-width="0.7"/><path d="M10.5 7.5L15.5 2V9L10.5 14.5Z" fill="#156a15"/><path d="M1 7.5H10.5V14.5H1Z" fill="#1f8a1f"/><path d="M3 8.5V11H6.5V8M4 6L8 2M6.5 6.5L10.5 2.2" fill="none" stroke="#dff" stroke-width="1.1"/><path d="M0 15.4H16" stroke="#000" stroke-width="1.2"/></svg>
<svg class="ic" style="left:79.0px;top:110.0px" viewBox="0 0 16 16"><rect x="1" y="2.5" width="14.5" height="11" fill="#1f8a1f" stroke="#0a3a0a"/><path d="M6 8L10 5.8H15V10.2H10Z" fill="#8a8a2a" stroke="#3a3a0a" stroke-width="0.6"/><path d="M0 15.4H16" stroke="#000" stroke-width="1.2"/></svg>
<svg class="ic" style="left:101.0px;top:110.0px" viewBox="0 0 16 16"><rect x="0.5" y="0.5" width="15" height="9" fill="#cdcdcd"/><path d="M0.8 2.5C0.8 5 3 5 3 3.3C3 5.8 5.4 5.8 5.4 4.1C5.4 6.6 7.8 6.6 7.8 4.9C7.8 7.4 10.2 7.4 10.2 5.7C10.2 8.2 12.6 8.2 12.6 6.5C12.6 9 15 9 15.2 7.3" fill="none" stroke="#000" stroke-width="1.6"/><path d="M0 15.4H16" stroke="#000" stroke-width="1.2"/></svg>
<svg class="ic" style="left:123.0px;top:110.0px" viewBox="0 0 16 16"><rect x="1.5" y="0.5" width="13" height="14.5" fill="#1f7d1f" stroke="#062a06" stroke-width="1.4"/><path d="M4.5 1L11.5 5.5L4.5 10L11.5 14.5M11.5 1L4.5 5.5L11.5 10L4.5 14.5" fill="none" stroke="#073807" stroke-width="1.1"/><path d="M4 0.5V15M12 0.5V15" stroke="#062a06" stroke-width="1"/><path d="M0 15.4H16" stroke="#000" stroke-width="1.2"/></svg>
<svg class="ic" style="left:145.0px;top:110.0px" viewBox="0 0 16 16"><rect x="0.5" y="0.5" width="15" height="7" fill="#cdcdcd"/><path d="M1.2 6.5V11H14.8V6.5M6.5 8V11M10.5 8V11" fill="none" stroke="#000" stroke-width="1.7"/><path d="M0 15.4H16" stroke="#000" stroke-width="1.2"/></svg>
<svg class="ic" style="left:175.0px;top:110.0px" viewBox="0 0 16 16"><rect x="1.5" y="1" width="13" height="13" fill="#fff" stroke="#1a1a9a" stroke-width="1.2"/><rect x="3.8" y="3.3" width="8.4" height="8.4" fill="#1a1ac8"/><rect x="6.2" y="5.7" width="3.6" height="3.6" fill="#fff"/><rect x="7.2" y="6.7" width="1.6" height="1.6" fill="#1a1ac8"/><path d="M0 15.4H16" stroke="#000" stroke-width="1.2"/></svg>
<svg class="ic" style="left:197.0px;top:110.0px" viewBox="0 0 16 16"><path d="M5 1H11L15 5V10.5L11 14.5H5L1 10.5V5Z" fill="#f6f6f6" stroke="#8a8a8a" stroke-width="0.9"/><path d="M8 4.5L10.8 7.8L8 11L5.2 7.8Z" fill="none" stroke="#1a1ac8" stroke-width="1.3"/><circle cx="8" cy="4.3" r="1" fill="#1a1ac8"/><circle cx="8" cy="11.2" r="1" fill="#1a1ac8"/><path d="M0 15.4H16" stroke="#000" stroke-width="1.2"/></svg>
<svg class="ic" style="left:219.0px;top:110.0px" viewBox="0 0 16 16"><defs><linearGradient id="bg1_1" x1="0" y1="0" x2="0" y2="1"><stop offset="0" stop-color="#8c8cf4"/><stop offset="1" stop-color="#0a0ab0"/></linearGradient><linearGradient id="bg2_1" x1="0" y1="0" x2="1" y2="0"><stop offset="0" stop-color="#8c8cf4"/><stop offset="1" stop-color="#0a0ab0"/></linearGradient></defs><path d="M2 8H14.5L15.5 14.8H0.5Z" fill="url(#bg1_1)"/><path d="M7 0.5H9.5V5.5L8.2 8L7 5.5Z" fill="#0a0ab0"/><path d="M0 15.4H16" stroke="#000" stroke-width="1.2"/></svg>
<svg class="ic" style="left:241.0px;top:110.0px" viewBox="0 0 16 16"><defs><linearGradient id="bg1_2" x1="0" y1="0" x2="0" y2="1"><stop offset="0" stop-color="#8c8cf4"/><stop offset="1" stop-color="#0a0ab0"/></linearGradient><linearGradient id="bg2_2" x1="0" y1="0" x2="1" y2="0"><stop offset="0" stop-color="#8c8cf4"/><stop offset="1" stop-color="#0a0ab0"/></linearGradient></defs><rect x="1" y="0.5" width="6" height="14.5" fill="url(#bg2_2)"/><path d="M8 7H14.5V9.8H8Z" fill="#1a1ac8"/><path d="M7.2 8.4L10 6V10.8Z" fill="#0a0a90"/><path d="M0 15.4H16" stroke="#000" stroke-width="1.2"/></svg>
<svg class="ic" style="left:263.0px;top:110.0px" viewBox="0 0 16 16"><defs><linearGradient id="bg1_3" x1="0" y1="0" x2="0" y2="1"><stop offset="0" stop-color="#8c8cf4"/><stop offset="1" stop-color="#0a0ab0"/></linearGradient><linearGradient id="bg2_3" x1="0" y1="0" x2="1" y2="0"><stop offset="0" stop-color="#8c8cf4"/><stop offset="1" stop-color="#0a0ab0"/></linearGradient></defs><path d="M1 7.5H4V10.5H12.5V7.5H15.5V14.8H1Z" fill="url(#bg1_3)"/><rect x="6.8" y="0.5" width="2.8" height="8.5" fill="#0a0ab0"/><path d="M8.2 1V8" stroke="#fff" stroke-width="0.7"/><path d="M0 15.4H16" stroke="#000" stroke-width="1.2"/></svg>
<svg class="ic" style="left:285.0px;top:110.0px" viewBox="0 0 16 16"><defs><linearGradient id="bg1_4" x1="0" y1="0" x2="0" y2="1"><stop offset="0" stop-color="#8c8cf4"/><stop offset="1" stop-color="#0a0ab0"/></linearGradient><linearGradient id="bg2_4" x1="0" y1="0" x2="1" y2="0"><stop offset="0" stop-color="#8c8cf4"/><stop offset="1" stop-color="#0a0ab0"/></linearGradient></defs><path d="M1 7.5H4V10.5H15.5V14.8H1Z" fill="url(#bg1_4)"/><rect x="6.8" y="0.5" width="2.8" height="9" fill="#0a0ab0"/><path d="M8.2 1V8" stroke="#fff" stroke-width="0.7"/><path d="M0 15.4H16" stroke="#000" stroke-width="1.2"/></svg>
<svg class="ic" style="left:315.0px;top:110.0px" viewBox="0 0 16 16"><path d="M1.5 0.8H11L14.5 4.3V14.6H1.5Z" fill="#fff" stroke="#14148a" stroke-width="1.2"/><circle cx="7.5" cy="8" r="3.2" fill="none" stroke="#2a5ad0" stroke-width="1.5" stroke-dasharray="1.6 1"/><path d="M6.5 8H10M8.5 6.5L10 8L8.5 9.5" fill="none" stroke="#14148a" stroke-width="1"/><path d="M3 3V13" stroke="#14148a" stroke-width="0.8" stroke-dasharray="1 1"/><path d="M0 15.4H16" stroke="#000" stroke-width="1.2"/></svg>
<svg class="ic" style="left:337.0px;top:110.0px" viewBox="0 0 16 16"><circle cx="4" cy="10.5" r="2.8" fill="#1a2ab8" stroke="#000" stroke-width="0.9"/><circle cx="11" cy="10.5" r="2.8" fill="#1a2ab8" stroke="#000" stroke-width="0.9"/><path d="M6.8 10H8.2M1.5 9L5.5 3.5L7 4.5M12.5 8L15.5 4" fill="none" stroke="#000" stroke-width="1.2"/><path d="M0 15.4H16" stroke="#000" stroke-width="1.2"/></svg>
<svg class="ic" style="left:359.0px;top:110.0px" viewBox="0 0 16 16"><path d="M1.5 0.8H10L14 4.8V14.6H1.5Z" fill="#fff" stroke="#14148a" stroke-width="1.2"/><path d="M10 0.8V4.8H14" fill="none" stroke="#14148a"/><path d="M5 13V5.5H8.5C11 5.5 11 9.2 8.5 9.2H5M8 9.2L11 13" fill="none" stroke="#1a1ac8" stroke-width="1.05"/><path d="M0 15.4H16" stroke="#000" stroke-width="1.2"/></svg>
<svg class="ic" style="left:381.0px;top:110.0px" viewBox="0 0 16 16"><path d="M0.5 4C3 0.5 8 0.5 10 3.5L8 4.5C7 3 4 3 2.5 4.5Z" fill="#d8d8d8" stroke="#000" stroke-width="0.9"/><path d="M5.5 4V9" stroke="#000" stroke-width="1.4"/><rect x="3.8" y="8.5" width="3.4" height="6.3" fill="#e8e03a" stroke="#000" stroke-width="0.8"/><rect x="11.5" y="0.5" width="3" height="3" fill="#000"/><path d="M13 3V10" stroke="#000" stroke-width="1.2"/><rect x="11.3" y="9.5" width="3.4" height="5.3" rx="1.2" fill="#e02a2a" stroke="#000" stroke-width="0.8"/><rect x="12.4" y="11" width="1.2" height="2.5" fill="#fff"/><path d="M0 15.4H16" stroke="#000" stroke-width="1.2"/></svg>
<svg class="ic" style="left:403.0px;top:110.0px" viewBox="0 0 16 16"><path d="M1.5 0.5V7L3.5 8.5" fill="none" stroke="#b8145a" stroke-width="1.5"/><path d="M3 10L10 1.5C13 0.5 16 2.5 15.5 5L8.5 13C5 14.5 2 13 3 10Z" fill="#1f8a1f" stroke="#0a4a0a" stroke-width="0.8"/><path d="M4.5 10.5L11.5 2.5M6.5 12.5L14 4" stroke="#0a5a0a" stroke-width="0.8"/><path d="M0 15.4H16" stroke="#000" stroke-width="1.2"/></svg>
<svg class="ic" style="left:433.0px;top:110.0px" viewBox="0 0 16 16"><path d="M3.5 6V3.5H10.5" fill="none" stroke="#000" stroke-width="1.3"/><path d="M13 3.5L9.5 1.3V5.7Z" fill="#000"/><path d="M13.5 0.5V5.5M12.2 6H15" stroke="#14148a" stroke-width="1.4"/><rect x="0.8" y="6.5" width="6.2" height="8.3" rx="1.8" fill="#1a3ac8" stroke="#0a1a6a" stroke-width="0.8"/><rect x="3" y="9.5" width="1.8" height="4.3" fill="#fff"/><rect x="3" y="7.6" width="1.8" height="1.3" fill="#fff"/><text x="8" y="14.8" font-family="Liberation Sans" font-weight="bold" font-size="7" fill="#1f8a1f">lib</text><path d="M0 15.4H16" stroke="#000" stroke-width="1.2"/></svg>
<svg class="ic" style="left:455.0px;top:110.0px" viewBox="0 0 16 16"><path d="M1.5 0.8H10L14 4.8V14.6H1.5Z" fill="#fff" stroke="#14148a" stroke-width="1.2"/><path d="M10 0.8V4.8H14" fill="none" stroke="#14148a"/><path d="M5.2 13V5.5H8.5C11.3 5.5 11.3 9.8 8.5 9.8H5.2" fill="none" stroke="#1a1ac8" stroke-width="1.05"/><path d="M0 15.4H16" stroke="#000" stroke-width="1.2"/></svg>
<svg class="ic" style="left:477.0px;top:110.0px" viewBox="0 0 16 16"><path d="M0.5 1.5H3L5 5H11L14 1.5H15.5V14.8H11.5V12H4.5V14.8H0.5Z" fill="#0a148a"/><path d="M9 4H15" stroke="#9ab0f0" stroke-width="0.9"/><path d="M0 15.4H16" stroke="#000" stroke-width="1.2"/></svg>
<svg class="ic" style="left:507.0px;top:110.0px" viewBox="0 0 16 16"><path d="M3 1.5H14M3 4.5H11M3 7.5H14M3 10.5H11M3 13H14" stroke="#7fd8e8" stroke-width="1.3"/><path d="M4.5 4.5H11M4.5 10.5H11" stroke="#1a3ac8" stroke-width="1.4"/><path d="M2 0.5V14" stroke="#2ac83a" stroke-width="1.3"/><path d="M0.8 4.5H3.5M0.8 7.5H3.5M0.8 10.5H3.5" stroke="#2ac83a" stroke-width="1.2"/><path d="M0 15.4H16" stroke="#000" stroke-width="1.2"/></svg>
<svg class="ic" style="left:3.0px;top:146.6px" viewBox="0 0 16 16"><path d="M2 13.5L14 2.5" stroke="#000" stroke-width="1.4"/><rect x="0.8" y="12" width="2.8" height="2.8" fill="#3a9ad8"/><rect x="12.6" y="1" width="2.8" height="2.8" fill="#3a9ad8"/></svg>
<svg class="ic" style="left:3.0px;top:168.6px" viewBox="0 0 16 16"><path d="M1 11.5L12 1.5M4 15L15 5" stroke="#000" stroke-width="1.5"/></svg>
<svg class="ic" style="left:3.0px;top:189.8px" viewBox="0 0 16 16"><circle cx="8" cy="8" r="6.8" fill="#f8f8f8" stroke="#000" stroke-width="1.4"/><path d="M8 5.5V10.5M5.5 8H10.5" stroke="#1a3ab0" stroke-width="1.3"/></svg>
<svg class="ic" style="left:3.0px;top:211.6px" viewBox="0 0 16 16"><path d="M2 14.5C2 7 7 2.5 14.5 2" fill="none" stroke="#445" stroke-width="1.4"/><rect x="0.6" y="13" width="2.8" height="2.8" fill="#3a9ad8"/><rect x="12.8" y="0.6" width="2.8" height="2.8" fill="#3a9ad8"/><rect x="4.4" y="5" width="2.4" height="2.4" fill="#3a9ad8"/></svg>
<svg class="ic" style="left:3.0px;top:233.4px" viewBox="0 0 16 16"><path d="M1 14C2 6 5.5 6.5 8 9.5C11 13 13 8 14.5 1.5" fill="none" stroke="#222" stroke-width="1.3"/></svg>
<svg class="ic" style="left:3.0px;top:255.6px" viewBox="0 0 16 16"><rect x="4.5" y="4.5" width="7" height="7" fill="#2a7ae0"/><rect x="3.5" y="3.5" width="9" height="9" fill="none" stroke="#9ac8f4" stroke-width="1"/></svg>
<svg class="ic" style="left:3.0px;top:277.2px" viewBox="0 0 16 16"><ellipse cx="8" cy="8" rx="7" ry="4.6" fill="#f8f8f8" stroke="#000" stroke-width="1.4"/><rect x="7" y="7" width="2.4" height="2.4" fill="#3a9ad8"/></svg>
<svg class="ic" style="left:3.0px;top:299.0px" viewBox="0 0 16 16"><rect x="1" y="3" width="14" height="9.5" fill="#f8f8f8" stroke="#000" stroke-width="1.4"/><rect x="7" y="6.8" width="2.4" height="2.4" fill="#3a9ad8"/></svg>
<svg class="ic" style="left:3.0px;top:320.8px" viewBox="0 0 16 16"><path d="M4.5 1.5H11.5L15 8L11.5 14.5H4.5L1 8Z" fill="#f8f8f8" stroke="#222" stroke-width="1.3"/><rect x="7" y="7" width="2.4" height="2.4" fill="#3a9ad8"/></svg>
<svg class="ic" style="left:3.0px;top:342.6px" viewBox="0 0 16 16"><path d="M1 14.5L13.5 1.5" stroke="#000" stroke-width="1"/><path d="M3.5 14.5L12 5.5C14.5 3 11.5 0.5 9.5 3L1.8 11.5C0 14 2 16 3.5 14.5Z" fill="#f8f8f8" stroke="#000" stroke-width="1.2"/></svg>
<svg class="ic" style="left:3.0px;top:364.4px" viewBox="0 0 16 16"><path d="M2 2.5H14V14M3 6.5H10V14" fill="none" stroke="#000" stroke-width="1.4"/></svg>
<svg class="ic" style="left:3.0px;top:387.0px" viewBox="0 0 16 16"><path d="M2.5 1V14H15" fill="none" stroke="#000" stroke-width="1.3"/><path d="M2.5 5C8 5 12 9 12 14" fill="none" stroke="#000" stroke-width="1.1"/><path d="M2.5 0L1 3H4ZM16 14L13 12.5V15.5Z" fill="#000"/></svg>
<svg class="ic" style="left:3.0px;top:409.0px" viewBox="0 0 16 16"><path d="M1 3.5H15M1 12.5H15M3.5 1V15M12.5 1V15" stroke="#1c5a9a" stroke-width="1.4"/><path d="M4.5 8L8 4.5M4.5 11.5L11.5 4.5M8 11.5L11.5 8" stroke="#3a8ad0" stroke-width="1.2"/></svg>
<svg class="ic" style="left:3.0px;top:430.8px" viewBox="0 0 16 16"><path d="M1.5 3H10.5L14.5 7.5V13.5H1.5Z" fill="#f0f4f8" stroke="#678" stroke-width="1.1" stroke-dasharray="2 0.8"/><ellipse cx="7" cy="8.5" rx="3" ry="2.4" fill="none" stroke="#456" stroke-width="1.2"/></svg>
<svg class="ic" style="left:3.0px;top:452.7px" viewBox="0 0 16 16"><path d="M0.5 15V14C1.5 14 2 13.5 2.5 12L7 0.8H9L13.5 12C14 13.5 14.5 14 15.5 14V15H9.5V14C11 14 11 13.3 10.6 12.2L10 10.5H5L4.4 12.2C4 13.3 4.3 14 5.8 14V15ZM5.5 9H9.5L7.5 3.8Z" fill="#14146a"/></svg>
<svg class="ic" style="left:3.0px;top:484.0px" viewBox="0 0 16 16"><rect x="1.5" y="1" width="10" height="8" fill="#f8f8f8" stroke="#000" stroke-width="1.3"/><circle cx="10" cy="10.5" r="4" fill="#f4f4f4" stroke="#000" stroke-width="1.2"/><path d="M0.5 10.5L5 12" stroke="#2a7ae0" stroke-width="1.3"/><path d="M16 12V16H12Z" fill="#666"/></svg>
<svg class="ic" style="left:3.0px;top:505.3px" viewBox="0 0 16 16"><rect x="1" y="9.5" width="12.5" height="5" rx="1.5" fill="#f4f4f4" stroke="#000" stroke-width="1.2"/><rect x="3" y="11" width="8" height="2.2" fill="#2a8ad8"/><path d="M1.5 8V4.5H6.5" fill="none" stroke="#000" stroke-width="1.3"/><path d="M8.5 4.5L5.5 2.5V6.5Z" fill="#000"/><rect x="9" y="1" width="5.5" height="3" fill="#f4f4f4" stroke="#000" stroke-width="1.1"/><rect x="10" y="5" width="3.5" height="3" fill="#f4f4f4" stroke="#000" stroke-width="1.1"/><path d="M16 12V16H12Z" fill="#666"/></svg>
<svg class="ic" style="left:3.0px;top:526.6px" viewBox="0 0 16 16"><rect x="1" y="9.5" width="12.5" height="5" rx="1.5" fill="#f4f4f4" stroke="#000" stroke-width="1.2"/><rect x="3" y="11" width="8" height="2.2" fill="#2a8ad8"/><path d="M1.5 8V4.5H6.5" fill="none" stroke="#000" stroke-width="1.3"/><path d="M8.5 4.5L5.5 2.5V6.5Z" fill="#000"/><path d="M9 8L11.8 1.2L14.6 8M10 6H13.6" fill="none" stroke="#000" stroke-width="1.2"/></svg>
<svg class="ic" style="left:3.0px;top:547.9px" viewBox="0 0 16 16"><rect x="1" y="9.5" width="12.5" height="5" rx="1.5" fill="#f4f4f4" stroke="#000" stroke-width="1.2"/><rect x="3" y="11" width="8" height="2.2" fill="#2a8ad8"/><path d="M1.5 8V4.5H6.5" fill="none" stroke="#000" stroke-width="1.3"/><path d="M8.5 4.5L5.5 2.5V6.5Z" fill="#000"/><path d="M12.5 0.5L9.5 4.5H12L10.5 8.5L15 3.5H12.5L14.5 0.5Z" fill="#f0e83a"/></svg>
<svg class="ic" style="left:31.0px;top:146.6px" viewBox="0 0 16 16"><path d="M1 13.5H15.5" stroke="#222" stroke-width="1"/><path d="M6 8L12.5 1L15.5 3.8L9 11Z" fill="#f0b030" stroke="#a0701a" stroke-width="0.6"/><path d="M6 8L9 11L6.8 13.2C5 14.5 2.5 12 4 10.2Z" fill="#f08a90" stroke="#b04a5a" stroke-width="0.6"/><path d="M12.5 1L15.5 3.8L14 5.5L11 2.6Z" fill="#d89020"/></svg>
<svg class="ic" style="left:31.0px;top:168.6px" viewBox="0 0 16 16"><path d="M8 0.5L11 4H9.3V6.7H12V5L15.5 8L12 11V9.3H9.3V12H11L8 15.5L5 12H6.7V9.3H4V11L0.5 8L4 5V6.7H6.7V4H5Z" fill="#6a8e86"/></svg>
<svg class="ic" style="left:31.0px;top:189.8px" viewBox="0 0 16 16"><path d="M1.5 2H9.5V10H1.5Z" fill="#e8e8e8" stroke="#7a7a7a" stroke-width="1.3"/><path d="M5 5.5H12L14.5 8V14.5H5Z" fill="#dcdcdc" stroke="#7a7a7a" stroke-width="1.3"/><path d="M3 4.5H8M7 8.5H11M7 11H12.5" stroke="#8a8a8a" stroke-width="1.5"/></svg>
<svg class="ic" style="left:31.0px;top:211.6px" viewBox="0 0 16 16"><path d="M8 0V16" stroke="#555" stroke-width="1"/><path d="M6 2.5V13.5H0.8ZM10 2.5V13.5H15.2Z" fill="#f4f4f4" stroke="#000" stroke-width="1.3"/></svg>
<svg class="ic" style="left:31.0px;top:233.4px" viewBox="0 0 16 16"><path d="M1 9.5L6.5 1.5V9.5ZM8 9.5L15.5 9.5L9 5" fill="none" stroke="#000" stroke-width="1.1"/><path d="M7.5 1.8C10 1 12 2.5 12.5 4.5" fill="none" stroke="#000" stroke-width="1"/><path d="M9.5 0.2L7 2L9.8 3.3Z" fill="#000"/><circle cx="7.8" cy="13" r="2.6" fill="#fff" stroke="#000" stroke-width="1.1"/><circle cx="7.8" cy="13" r="1" fill="#000"/></svg>
<svg class="ic" style="left:31.0px;top:255.6px" viewBox="0 0 16 16"><rect x="1.3" y="1.3" width="5" height="5" fill="#fafafa" stroke="#000" stroke-width="1.4"/><rect x="9.5" y="1.3" width="5" height="5" fill="#fafafa" stroke="#000" stroke-width="1.4"/><rect x="1.3" y="9.5" width="5" height="5" fill="#fafafa" stroke="#000" stroke-width="1.4"/><rect x="9.5" y="9.5" width="5" height="5" fill="#fafafa" stroke="#000" stroke-width="1.4"/></svg>
<svg class="ic" style="left:31.0px;top:277.2px" viewBox="0 0 16 16"><rect x="1" y="7.5" width="7.5" height="7" fill="#fafafa" stroke="#000" stroke-width="1.4"/><path d="M4 5.5V1.5H14.5V11.5H10.5" fill="none" stroke="#000" stroke-width="1.4"/><path d="M9 5.5H10.5M8 7.5L10.5 5M11 13.5V15.5" stroke="#000" stroke-width="1" stroke-dasharray="1.2 1"/></svg>
<svg class="ic" style="left:31.0px;top:299.0px" viewBox="0 0 16 16"><path d="M0.5 4H7M10 3.5L15.5 2.5" stroke="#000" stroke-width="1" stroke-dasharray="2 1"/><path d="M4.5 1L10 10M11.5 1L6 10" stroke="#111" stroke-width="1.4"/><circle cx="5" cy="12.8" r="2.2" fill="none" stroke="#14149a" stroke-width="1.3"/><circle cx="11" cy="12.8" r="2.2" fill="none" stroke="#14149a" stroke-width="1.3"/><path d="M7 2.5L9 1.2" stroke="#2a2" stroke-width="1"/></svg>
<svg class="ic" style="left:31.0px;top:320.8px" viewBox="0 0 16 16"><path d="M1.5 15V8C1.5 3.5 5 1.5 15.5 1.5" fill="none" stroke="#000" stroke-width="1.5"/><path d="M1.5 1.5H15M1.5 1.5V8" stroke="#555" stroke-width="0.9" stroke-dasharray="1.5 1.2"/><path d="M3 11C4 6.5 7 4.5 11.5 3.5" fill="none" stroke="#1a3ab0" stroke-width="1.1"/></svg>
<svg class="ic" style="left:31.0px;top:342.6px" viewBox="0 0 16 16"><path d="M0.5 9.5H6.5" stroke="#000" stroke-width="2"/><rect x="8" y="8.2" width="2.6" height="2.6" fill="#1a3ab0"/><path d="M11 14.5L15 1.5" stroke="#000" stroke-width="1.5"/></svg>
<svg class="ic" style="left:31.0px;top:365.0px" viewBox="0 0 16 16"><path d="M2 13.5L14 2.5" stroke="#1a5ab0" stroke-width="1.3" stroke-dasharray="2.5 1.3"/><rect x="0.6" y="12" width="2.8" height="2.8" fill="#3ab0e8"/><path d="M12.5 1L15.5 1L15.5 4" fill="none" stroke="#3a8ad8" stroke-width="1.5"/></svg>
<svg class="ic" style="left:31.0px;top:386.7px" viewBox="0 0 16 16"><path d="M1.5 5.5V14H14.5V5.5" fill="#fafafa" stroke="#000" stroke-width="1.5"/><path d="M1.5 5.5H5M11 5.5H14.5M5 3V5.5M11 3V5.5" stroke="#000" stroke-width="1.3"/></svg>
<svg class="ic" style="left:31.0px;top:409.0px" viewBox="0 0 16 16"><path d="M1.5 14.5L8.5 7.5" stroke="#1a3ab0" stroke-width="2.2"/><path d="M3 6L6 9M9 12L6.5 9.5" stroke="#e0a020" stroke-width="2"/><path d="M9 7L14 1.5" stroke="#6a8ae0" stroke-width="1.6"/><path d="M11 1L15.5 5.5M15 1L11.5 5M13.2 0.3V6.2M10.5 3.2H16" stroke="#7a9af0" stroke-width="0.9"/><circle cx="3.5" cy="12.5" r="1.6" fill="#e0a020"/></svg>
<svg class="ic" style="left:31.0px;top:430.4px" viewBox="0 0 16 16"><path d="M13.5 0.5V15.5" stroke="#000" stroke-width="2"/><path d="M1.5 0.5V15.5" stroke="#000" stroke-width="1.1" stroke-dasharray="2 1.5"/><path d="M3 8H8" stroke="#1a2ad0" stroke-width="1.6"/><path d="M11.5 8L7 5V11Z" fill="#1a2ad0"/></svg>
<svg class="ic" style="left:31.0px;top:453.0px" viewBox="0 0 16 16"><rect x="0.5" y="8.5" width="7" height="6" rx="1" fill="#2fae4a" stroke="#157a2a" stroke-width="0.8"/><path d="M7 13L13 7" stroke="#000" stroke-width="2"/><path d="M15.5 4.5L14.5 11L9 5.5Z" fill="#000"/><rect x="9" y="0.5" width="6" height="4.5" fill="#7a7ad8" stroke="#3a3a8a" stroke-width="0.7"/><path d="M10 1V5M11.5 1V5M13 1V5" stroke="#cfcff8" stroke-width="0.6"/></svg>
<svg class="ic" style="left:31.0px;top:474.7px" viewBox="0 0 16 16"><path d="M4 1.5H15L12 5.5H1Z" fill="#fafafa" stroke="#222" stroke-width="1.1"/><path d="M4 10.5H15L12 14.5H1Z" fill="#3ad0e0" stroke="#157a8a" stroke-width="1"/><path d="M6 6L8 9.5L10 6Z" fill="#000"/><path d="M16 12V16H12Z" fill="#666"/></svg>
<svg class="ic" style="left:31.0px;top:504.2px" viewBox="0 0 16 16"><path d="M1 2V14M15 2V14M2 8.5H14" stroke="#000" stroke-width="1.3"/><path d="M1.5 8.5L5 6.5V10.5ZM14.5 8.5L11 6.5V10.5Z" fill="#000"/><path d="M6 9.5L8 6L13 1.5L14.8 3.2L10 8Z" fill="#f0a860" stroke="#b06a2a" stroke-width="0.6"/></svg>
<svg class="ic" style="left:31.0px;top:525.5px" viewBox="0 0 16 16"><path d="M5 1V7M15 1V7M6 4H14" stroke="#000" stroke-width="1.3"/><path d="M5.5 4L8.5 2.2V5.8ZM14.5 4L11.5 2.2V5.8Z" fill="#000"/><path d="M1 9.5V15M8 9.5V15M1.5 12.3H7.5" stroke="#1a3ac8" stroke-width="1.2"/><path d="M10 12.5H13.5V9.5" fill="none" stroke="#000" stroke-width="1.1"/><path d="M13.5 8L11.8 10.8H15.2Z" fill="#000"/></svg>
<svg class="ic" style="left:31.0px;top:546.8px" viewBox="0 0 16 16"><path d="M9 6L13 1.5C14 0.5 15.5 2 14.6 3L10.8 7.5Z" fill="#14148a"/><path d="M2 9.5L8 5L11.5 8.5L6 14.5C4.5 13 3 11.5 2 9.5Z" fill="#a8a8a8" stroke="#555" stroke-width="0.8"/><path d="M2 9.5L1 12L4 15L6 14.5" fill="#d8d8d8" stroke="#666" stroke-width="0.7"/></svg>
<svg class="ic" style="left:1898.0px;top:146.6px" viewBox="0 0 16 16"><path d="M1 3.5H4V2H7.5V6.5H1ZM9.5 6.5V4H12V1.5H14.5V6.5Z" fill="#f4f4f4" stroke="#000" stroke-width="1.3"/><rect x="1" y="9" width="6.5" height="6" fill="#f4f4f4" stroke="#000" stroke-width="1.3"/><rect x="3" y="11" width="3" height="3" fill="#888"/><path d="M10 10H15M10 12H15M10 14H15" stroke="#e04a4a" stroke-width="0.9" stroke-dasharray="1 1"/><path d="M7 3L15.5 13" stroke="#c8142a" stroke-width="1.5"/></svg>
<svg class="ic" style="left:1898.0px;top:168.0px" viewBox="0 0 16 16"><path d="M1 6L6 1.5H12L15.5 4.5V10L9 15L1 11.5Z" fill="#f4f8f8" stroke="#000" stroke-width="1.3"/><path d="M1 6L9 9.5L15.5 4.5M9 9.5V15" fill="none" stroke="#000" stroke-width="1.1"/><path d="M9 9.5L15.5 4.5V10L9 15Z" fill="#bcd8e8"/><ellipse cx="8.3" cy="5" rx="3.5" ry="1.9" fill="#fff" stroke="#000" stroke-width="1.2"/></svg>
<svg class="ic" style="left:1898.0px;top:197.0px" viewBox="0 0 16 16"><path d="M1.5 5.5L5.5 1.5" stroke="#1a3ac8" stroke-width="1.4"/><path d="M0.5 4L1 7L3.5 5.5ZM6.5 3L6 0.2L3.8 1.6Z" fill="#1a3ac8"/><path d="M8 6.5V4H11V6.5H14.5V10.5H8Z" fill="#f4f4f4" stroke="#000" stroke-width="1.3"/><path d="M5 7V13.5H11.5V11.5" fill="#f0e890" stroke="#d0c050" stroke-width="0.9"/></svg>
<svg class="ic" style="left:1898.0px;top:219.5px" viewBox="0 0 16 16"><path d="M1 3.5V1H6.5V5" fill="none" stroke="#000" stroke-width="1.3"/><rect x="6.5" y="6.5" width="8.5" height="8.5" fill="#bcd4f0" stroke="#000" stroke-width="0.9"/><circle cx="2.8" cy="12.5" r="2" fill="#1a3ac8"/><circle cx="6.5" cy="9" r="1.6" fill="#1a3ac8"/><circle cx="3" cy="7.5" r="1.2" fill="#1a3ac8"/><path d="M2 14L7 8M4 10L8 13" stroke="#e0a020" stroke-width="1"/><path d="M10.5 1L15 5.5M15 1L10.5 5.5M12.8 0V6.5" stroke="#3a6ae0" stroke-width="1"/></svg>
<svg class="ic" style="left:1898.0px;top:242.0px" viewBox="0 0 16 16"><path d="M1 1.5H6.5V6.5H15V14.5H1Z" fill="#f4f4f4" stroke="#000" stroke-width="1.4"/><path d="M1 6.5H6.5" stroke="#000" stroke-width="1.2"/><path d="M7 13L9 9L14.5 1.5L15.8 2.8L11 10Z" fill="#f0a860" stroke="#b06a2a" stroke-width="0.6"/><path d="M6 14.5L13 8" stroke="#e04a4a" stroke-width="0.9"/><rect x="6.5" y="9" width="5" height="4.5" fill="#d8ecec" fill-opacity="0.7"/></svg>
<svg class="ic" style="left:1898.0px;top:271.0px" viewBox="0 0 16 16"><path d="M1.5 1V9C1.5 11 3 12 4 12M14.5 1V9C14.5 11 13 12 12 12" fill="none" stroke="#e04a1a" stroke-width="1.5"/><path d="M0.5 2L1.5 0L2.8 2ZM13.3 2L14.5 0L15.6 2Z" fill="#e04a1a"/><rect x="3.5" y="4.5" width="9" height="9.5" fill="#dce8e0" stroke="#000" stroke-width="1.3"/><circle cx="8" cy="9.2" r="2.6" fill="#fafafa" stroke="#d03a1a" stroke-width="1.1"/><path d="M1.5 9.2H14.5" stroke="#d03a1a" stroke-width="0.9"/></svg>
<svg class="ic" style="left:1898.0px;top:293.0px" viewBox="0 0 16 16"><rect x="2" y="3.5" width="13" height="8.5" fill="#e8ece8" stroke="#000" stroke-width="1.4"/><circle cx="9" cy="7.8" r="2.7" fill="#b4b4b4" stroke="#000" stroke-width="1.1"/><path d="M7.5 9.5L10.5 6" stroke="#000" stroke-width="1"/><path d="M5 2C2.5 2 1.5 3.5 1.5 5.5V10.5C1.5 12.5 2.5 13.5 4 13.5" fill="none" stroke="#e04a1a" stroke-width="1.4"/><path d="M3 11.5L5.5 13.8L3 15.5ZM5 0.5L2.8 2L5 3.6Z" fill="#e04a1a"/></svg>
<svg class="ic" style="left:1898.0px;top:315.0px" viewBox="0 0 16 16"><rect x="1" y="1.5" width="14" height="13" fill="#dce0e4" stroke="#000" stroke-width="1.4"/><path d="M8.5 1.5V14.5" stroke="#000" stroke-width="1.1"/><path d="M6 2C3.5 5 3.5 11 6 14" fill="none" stroke="#e07a4a" stroke-width="1.4"/><path d="M10 13L14 3M10 9L13 2M11.5 14L14.5 7" stroke="#1a2a6a" stroke-width="1.2"/></svg>
<svg class="ic" style="left:1898.0px;top:338.0px" viewBox="0 0 16 16"><path d="M1 3.5H4V2H7.5V6.5H1ZM9.5 6.5V4H12V1.5H14.5V6.5Z" fill="#f4f4f4" stroke="#000" stroke-width="1.3"/><rect x="1" y="9" width="6.5" height="6" fill="#f4f4f4" stroke="#000" stroke-width="1.3"/><rect x="3" y="11" width="3" height="3" fill="#888"/><path d="M13.5 7.5L9.5 12H12L10 16L15.5 10.5H13L15 7.5Z" fill="#f0e83a" stroke="#c8c020" stroke-width="0.4"/></svg>
<div class="a" style="left:55px;top:133px;width:1837px;height:865px;background:#000"></div>
<svg style="left:0;top:0" width="1920" height="1072" viewBox="0 0 1920 1072"><rect x="54.4" y="132.5" width="1838.5" height="866" fill="#000"/></svg>
<svg style="left:0;top:0" width="1920" height="1072" viewBox="0 0 1920 1072" fill="none"><path d="M557 381.5L1210 381.5" stroke="#c4c4c4" stroke-width="1"/><path d="M557.5 381L557.5 500" stroke="#c4c4c4" stroke-width="1"/><path d="M1150.5 381L1150.5 500" stroke="#c4c4c4" stroke-width="1"/><path d="M113 499.5L1151 499.5" stroke="#c4c4c4" stroke-width="1"/><path d="M557 529.5L1151 529.5" stroke="#c4c4c4" stroke-width="1"/><path d="M557 558.5L1151 558.5" stroke="#c4c4c4" stroke-width="1"/><path d="M557 588.5L1151 588.5" stroke="#9a9a9a" stroke-width="1.4"/><path d="M102 584.5L1140 584.5" stroke="#42a84a" stroke-width="2"/><path d="M547 613L1140 613" stroke="#42a84a" stroke-width="1.8"/><path d="M547 642.5L1140 642.5" stroke="#42a84a" stroke-width="1.8"/><path d="M547 672L1140 672" stroke="#42a84a" stroke-width="1.8"/><path d="M113.5 500V574L102.5 584.5" stroke="#bd262c" fill="none"/><path d="M557.5 499V691L547.5 701" stroke="#bd262c" fill="none"/><path d="M547.5 613L557.5 603" stroke="#bd262c" stroke-width="1"/><path d="M547.5 642.5L557.5 632.5" stroke="#bd262c" stroke-width="1"/><path d="M547.5 672L557.5 662" stroke="#bd262c" stroke-width="1"/><path d="M1150.5 499V691L1140.5 701" stroke="#c43cc8" fill="none"/><path d="M1140.5 584.5L1150.5 574.5" stroke="#c43cc8" stroke-width="1"/><path d="M1140.5 613L1150.5 603" stroke="#c43cc8" stroke-width="1"/><path d="M1140.5 642.5L1150.5 632.5" stroke="#c43cc8" stroke-width="1"/><path d="M1140.5 672L1150.5 662" stroke="#c43cc8" stroke-width="1"/><path d="M102 591.5H547V701" stroke="#fff" stroke-width="2.2" fill="none"/><path d="M102 592.6V555H1140V701.5" stroke="#fff" stroke-width="2.2" fill="none"/><path d="M546 701.3L1141 701.3" stroke="#b6f7a8" stroke-width="2.2"/><path d="M58 922H1184" stroke="#b5222f" stroke-width="1.3" stroke-dasharray="64 5.5 5 5.5"/><path d="M102 922L102 999" stroke="#fff" stroke-width="2"/><path d="M547 922L547 999" stroke="#fff" stroke-width="2"/><path d="M1140 922L1140 999" stroke="#fff" stroke-width="2"/><path d="M1140 922H1181" stroke="#d23a92" stroke-width="2"/><path d="M1169.5 911.5L1180 922L1170 931" stroke="#c43cc8" fill="none"/><path d="M1139.5 922V881.5M1129 892.5L1139.5 881.5L1149 891" stroke="#c43cc8" fill="none"/><circle cx="547.5" cy="615.5" r="10" fill="#b9ad12" fill-opacity="0.88"/><path d="M547.5 617.5V632L550.8 629L553.2 634.5L555.2 633.6L552.9 628.3H557.5Z" fill="#fff" stroke="#000" stroke-width="0.8" stroke-linejoin="round"/></svg>
<div class="a" style="left:1556px;top:331px;width:249px;height:591px;background:#f0f0f0;border:1px solid #f6f6f6"></div>
<div class="a" style="left:1556px;top:331px;width:249px;height:29px;background:#fff"></div>
<svg style="left:1785px;top:339.5px" width="10" height="10" viewBox="0 0 10 10" fill="none" stroke="#9a9a9a" stroke-width="1.3"><path d="M0 0L10 10M10 0L0 10"/></svg>
<div class="a" style="left:1566px;top:370px;width:228px;height:541px;background:#fff;border:1px solid #828282;border-right-color:#e3e3e3;border-bottom-color:#e3e3e3;box-shadow:inset 1px 1px 0 #696969"></div>
<div class="t" style="left:1699px;top:429px;font-family:'Liberation Mono',monospace;font-size:10px;line-height:12px">No:1 R0.000 <span style="font-size:12px;font-family:'Liberation Sans',sans-serif"><i>刀</i><i>具</i></span></div>
<div class="t" style="left:1696px;top:412px;font-size:12px"><i>刀</i></div>
<div class="a" style="left:1568px;top:894px;width:225px;height:16px;background:#f0f0f0"></div>
<div class="a" style="left:1585px;top:894px;width:158px;height:15px;background:#cdcdcd"></div>
<svg style="left:1573px;top:897px" width="7" height="10" viewBox="0 0 7 10" fill="none" stroke="#505050" stroke-width="1.6"><path d="M5.5 1L1.5 5L5.5 9"/></svg>
<svg style="left:1781px;top:897px" width="7" height="10" viewBox="0 0 7 10" fill="none" stroke="#505050" stroke-width="1.6"><path d="M1.5 1L5.5 5L1.5 9"/></svg>
<div class="a" style="left:1205px;top:183px;width:497px;height:631px;background:#f0f0f0;border:1px solid #8a8a8a;border-top-color:#b0b0b0"></div>
<div class="a" style="left:1206px;top:184px;width:495px;height:24px;background:#fff"></div>
<div class="t" style="left:1209px;top:189px;"><i>粗</i><i>车</i><i>参</i><i>数</i><i>表</i></div>
<svg style="left:1681px;top:190.5px" width="10" height="10" viewBox="0 0 10 10" fill="none" stroke="#111" stroke-width="1.1"><path d="M0 0L10 10M10 0L0 10"/></svg>
<div class="a" style="left:1213px;top:241px;width:481px;height:525px;border:1px solid #fff;border-right-color:#696969;border-bottom-color:#696969;box-shadow:inset -1px -1px 0 #a0a0a0"></div>
<div class="a" style="left:1215px;top:220px;width:60px;height:22px;background:#f0f0f0;border:1px solid #fff;border-right:1px solid #696969;border-bottom:none;border-radius:2px 2px 0 0;box-shadow:inset -1px 0 0 #a0a0a0"></div>
<div class="t" style="left:1221px;top:225px;"><i>加</i><i>工</i><i>精</i><i>度</i></div>
<div class="a" style="left:1275px;top:220px;width:71px;height:22px;background:#f0f0f0;border:1px solid #fff;border-right:1px solid #696969;border-bottom:none;border-radius:2px 2px 0 0;box-shadow:inset -1px 0 0 #a0a0a0"></div>
<div class="t" style="left:1281px;top:225px;"><i>进</i><i>退</i><i>刀</i><i>方</i><i>式</i></div>
<div class="a" style="left:1410px;top:220px;width:57px;height:22px;background:#f0f0f0;border:1px solid #fff;border-right:1px solid #696969;border-bottom:none;border-radius:2px 2px 0 0;box-shadow:inset -1px 0 0 #a0a0a0"></div>
<div class="t" style="left:1413px;top:225px;"><i>轮</i><i>廓</i><i>车</i><i>刀</i></div>
<div class="a" style="left:1344px;top:218px;width:65px;height:25px;background:#f0f0f0;border:1px solid #fff;border-right:1px solid #696969;border-bottom:none;border-radius:2px 2px 0 0;box-shadow:inset -1px 0 0 #a0a0a0"></div>
<div class="t" style="left:1353px;top:223px;"><i>切</i><i>削</i><i>用</i><i>量</i></div>
<div class="grp" style="left:1229px;top:262px;width:398px;height:148px"></div>
<div class="hs" style="left:1230px;top:283px;width:396px"></div>
<div class="hs" style="left:1230px;top:355px;width:396px"></div>
<div class="a" style="left:1235px;top:256px;width:56px;height:14px;background:#f0f0f0"></div>
<div class="t" style="left:1238px;top:257px;"><i>速</i><i>度</i><i>设</i><i>定</i>:</div>
<div class="a" style="left:1211px;top:248px;width:434px;height:162px;border:1.4px solid #d6262b"></div>
<div class="a" style="left:1227px;top:246px;width:71px;height:33px;border:1.4px solid #d6262b"></div>
<div class="t" style="left:1257px;top:299px;"><i>进</i><i>退</i><i>刀</i><i>时</i><i>快</i><i>速</i><i>走</i><i>刀</i>:</div>
<div class="rad on" style="left:1410px;top:299px"></div>
<div class="t" style="left:1428px;top:299px;"><i>是</i></div>
<div class="rad" style="left:1495px;top:299px"></div>
<div class="t" style="left:1513px;top:299px;"><i>否</i></div>
<div class="t" style="left:1257px;top:332px;"><i>接</i><i>近</i><i>速</i><i>度</i></div>
<div class="edit dis" style="left:1324px;top:323px;width:59px;height:25px"></div>
<div class="t" style="left:1329px;top:329px;color:#8c8c8c">5</div>
<div class="t" style="left:1461px;top:332px;"><i>退</i><i>刀</i><i>速</i><i>度</i></div>
<div class="edit dis" style="left:1516px;top:323px;width:57px;height:25px"></div>
<div class="t" style="left:1521px;top:329px;color:#8c8c8c">20</div>
<div class="t" style="left:1257px;top:379px;"><i>进</i><i>刀</i><i>量</i>:</div>
<div class="edit" style="left:1324px;top:370px;width:57px;height:25px"></div>
<div class="t" style="left:1329px;top:376px;">10</div>
<div class="t" style="left:1411px;top:379px;"><i>单</i><i>位</i>:</div>
<div class="rad on" style="left:1460px;top:378px"></div>
<div class="t" style="left:1478px;top:378px;font-size:13px;letter-spacing:0.2px">mm/min</div>
<div class="rad" style="left:1546px;top:378px"></div>
<div class="t" style="left:1564px;top:378px;font-size:13px;letter-spacing:0.2px">mm/rev</div>
<div class="grp" style="left:1229px;top:439px;width:398px;height:126px"></div>
<div class="a" style="left:1235px;top:433px;width:81px;height:14px;background:#f0f0f0"></div>
<div class="t" style="left:1238px;top:434px;"><i>主</i><i>轴</i><i>转</i><i>速</i><i>选</i><i>项</i>:</div>
<div class="rad on" style="left:1261px;top:465px"></div>
<div class="t" style="left:1279px;top:466px;"><i>恒</i><i>转</i><i>速</i></div>
<div class="rad" style="left:1429px;top:465px"></div>
<div class="t" style="left:1447px;top:466px;"><i>恒</i><i>线</i><i>速</i><i>度</i></div>
<div class="t" style="left:1257px;top:495px;"><i>主</i><i>轴</i><i>转</i><i>速</i></div>
<div class="edit" style="left:1324px;top:490px;width:57px;height:25px"></div>
<div class="a" style="left:1327.5px;top:494px;width:15px;height:16px;background:#2b8cf0"></div>
<div class="t" style="left:1328px;top:496px;color:#fff">20</div>
<div class="t" style="left:1387px;top:497px;font-size:13px;letter-spacing:0.3px">rpm</div>
<div class="t" style="left:1445px;top:495px;"><i>线</i><i>速</i><i>度</i></div>
<div class="edit dis" style="left:1492px;top:490px;width:69px;height:28px"></div>
<div class="t" style="left:1497px;top:496px;color:#8c8c8c">120</div>
<div class="t" style="left:1572px;top:497px;font-size:13px;letter-spacing:0.3px">m/min</div>
<div class="t" style="left:1397px;top:533px;"><i>主</i><i>轴</i><i>最</i><i>高</i><i>转</i><i>速</i></div>
<div class="edit dis" style="left:1492px;top:526px;width:69px;height:29px"></div>
<div class="t" style="left:1497px;top:532px;color:#8c8c8c">10000</div>
<div class="t" style="left:1572px;top:537px;font-size:13px;letter-spacing:0.3px">rpm</div>
<div class="grp" style="left:1229px;top:585px;width:398px;height:81px"></div>
<div class="a" style="left:1235px;top:579px;width:81px;height:14px;background:#f0f0f0"></div>
<div class="t" style="left:1238px;top:580px;"><i>样</i><i>条</i><i>拟</i><i>合</i><i>方</i><i>式</i>:</div>
<div class="rad" style="left:1261px;top:607px"></div>
<div class="t" style="left:1279px;top:607px;"><i>直</i><i>线</i><i>拟</i><i>合</i></div>
<div class="rad on" style="left:1429px;top:607px"></div>
<div class="t" style="left:1447px;top:607px;"><i>圆</i><i>弧</i><i>拟</i><i>合</i></div>
<div class="t" style="left:1410px;top:640px;"><i>拟</i><i>合</i><i>圆</i><i>弧</i><i>最</i><i>大</i><i>半</i><i>径</i></div>
<div class="edit" style="left:1516px;top:631px;width:57px;height:25px"></div>
<div class="t" style="left:1521px;top:637px;">9999</div>
<div class="btn" style="left:1512px;top:774px;width:88px;height:30px;border:1px solid #696969;box-shadow:inset 1px 1px 0 #fff,inset -1px -1px 0 #696969,inset -2px -2px 0 #a0a0a0;line-height:28px"><i>确</i><i>定</i></div>
<div class="btn" style="left:1607px;top:774px;width:88px;height:30px;line-height:28px"><i>取</i><i>消</i></div>
<div class="a" style="left:1655px;top:948px;width:161px;height:24px;background:#fdfdfe"></div>
<svg style="left:1630px;top:943px" width="30" height="30" viewBox="0 0 30 30"><g transform="rotate(-13 15 15)"><rect x="2.5" y="3" width="24.5" height="24.5" rx="2.5" fill="#e8612d"/><path d="M22.5 10.5C18 7 7.5 8 7.5 12.5C7.5 17 22.5 14.2 22.5 19C22.5 23.5 11 24 6.5 20.5" fill="none" stroke="#fff" stroke-width="4" stroke-linecap="round"/></g></svg>
<div class="t" style="left:1664px;top:952.5px;font-size:15px;line-height:15px;font-weight:bold;color:#2f76c2;-webkit-text-stroke:0.7px #2f76c2"><i>英</i></div>
<svg style="left:1687px;top:952px" width="15" height="15" viewBox="0 0 15 15"><path d="M9.3 0.8A7 7 0 1 1 0.5 10.8A7.2 7.2 0 0 0 9.3 0.8Z" fill="#2f76c2"/></svg>
<svg style="left:1711px;top:953px" width="10" height="15" viewBox="0 0 10 15"><circle cx="1.8" cy="2.8" r="1.6" fill="#2f76c2"/><path d="M6 4.5C9.5 4.5 9.2 10 5.5 11C7 9.5 7 8 5.5 7.5C4.5 6.5 5 4.5 6 4.5Z" fill="#2f76c2"/></svg>
<svg style="left:1730px;top:954px" width="16" height="12" viewBox="0 0 16 12"><rect x="0" y="0" width="16" height="12" rx="1.8" fill="#2f76c2"/><path d="M2.3 3H14M2.3 5.6H14" stroke="#fff" stroke-width="1.5" stroke-dasharray="1.5 0.9"/><path d="M4 8.6H12" stroke="#fff" stroke-width="1.5"/></svg>
<svg style="left:1754px;top:952px" width="15" height="16" viewBox="0 0 15 16"><circle cx="6" cy="4" r="3.1" fill="#b9bfd2"/><path d="M0.5 13C0.5 7.6 11.5 7.6 11.5 13Z" fill="#b9bfd2"/><rect x="8" y="9.3" width="6" height="5.4" rx="1" fill="#fff" stroke="#cfcfd6"/><path d="M10 11.2H12V12.8H10Z" fill="none" stroke="#b9bfd2" stroke-width="0.8"/></svg>
<svg style="left:1775px;top:953px" width="14" height="14" viewBox="0 0 14 14"><path d="M4 0.5C5 2 9 2 10 0.5L14 3L12.5 6L11 5.3V13.5H3V5.3L1.5 6L0 3Z" fill="#2f76c2"/></svg>
<svg style="left:1797px;top:952px" width="15" height="15" viewBox="0 0 15 15"><path d="M2 13.2L9 6.2" stroke="#2f76c2" stroke-width="3" stroke-linecap="round"/><path d="M13.8 3.2A4 4 0 1 1 10.8 0.6L9.6 3.2L11.4 4.9Z" fill="#2f76c2"/></svg>
<div class="a" style="left:0;top:999px;width:1920px;height:1px;background:#e3e3e3"></div>
<div class="a" style="left:0;top:1000px;width:1920px;height:1px;background:#b8b8b8"></div>
<div class="a" style="left:0;top:1001px;width:1px;height:20px;background:#a8a8a8"></div>
<div class="a" style="left:0;top:1020px;width:1920px;height:1px;background:#a8a8a8"></div>
<div class="a" style="left:0;top:1021px;width:1920px;height:1px;background:#fff"></div>
<div class="t" style="left:2px;top:1027px"><i>命</i><i>令</i>:</div>
<div class="a" style="left:1433px;top:1025px;width:100px;height:17px;border:1px solid #a8a8a8;border-right-color:#fff;border-bottom-color:#fff"></div>
<div class="t" style="left:1435px;top:1028px"><i>空</i><i>命</i><i>令</i></div>
<div class="a" style="left:1536px;top:1025px;width:267px;height:17px;border:1px solid #a8a8a8;border-right-color:#fff;border-bottom-color:#fff"></div>
<div class="t" style="left:1538px;top:1028px"><span style="letter-spacing:0.12px">32.731,40.342</span></div>
<div class="a" style="left:1806px;top:1025px;width:57px;height:17px;border:1px solid #a8a8a8;border-right-color:#fff;border-bottom-color:#fff"></div>
<div class="t" style="left:1808px;top:1028px"><i>拾</i><i>取</i><i>添</i><i>加</i></div>
<div class="a" style="left:1867px;top:1024px;width:51px;height:18px;background:#fff;border:1px solid #828282;box-shadow:inset 1px 1px 0 #696969"></div>
<div class="a" style="left:1902px;top:1026px;width:15px;height:16px;background:#f0f0f0"></div>
<div class="t" style="left:1870px;top:1029px"><i>智</i><i>能</i></div>
<div class="a" style="left:1906px;top:1034px;width:0;height:0;border-left:3.5px solid transparent;border-right:3.5px solid transparent;border-top:4px solid #000"></div>
<div class="a" style="left:0;top:1042px;width:1920px;height:30px;background:linear-gradient(90deg,#090e14 0%,#0b1117 24%,#131b23 31%,#0c1218 42%,#0b1117 60%,#10181f 68%,#0a0f15 80%,#090e13 100%)"></div>
<div class="a" style="left:444px;top:1042px;width:36px;height:30px;background:#333a40"></div>
<div class="a" style="left:78px;top:1070px;width:28px;height:2px;background:#76b9ed"></div>
<div class="a" style="left:336px;top:1070px;width:28px;height:2px;background:#76b9ed"></div>
<div class="a" style="left:374px;top:1070px;width:27px;height:2px;background:#76b9ed"></div>
<div class="a" style="left:410px;top:1070px;width:28px;height:2px;background:#76b9ed"></div>
<div class="a" style="left:444px;top:1070px;width:36px;height:2px;background:#76b9ed"></div>
<svg style="left:10px;top:1049px" width="16" height="16" viewBox="0 0 16 16" fill="#fff"><path d="M0 2.3L6.5 1.4V7.6H0ZM7.4 1.3L16 0V7.6H7.4ZM0 8.4H6.5V14.6L0 13.7ZM7.4 8.4H16V16L7.4 14.7Z"/></svg>
<svg style="left:46px;top:1049px" width="16" height="16" viewBox="0 0 16 16"><circle cx="8" cy="8" r="6.3" fill="none" stroke="#fff" stroke-width="1.9"/></svg>
<svg style="left:84px;top:1049px" width="18" height="16" viewBox="0 0 18 16"><path d="M0 1H6L7.5 3H17V14H0Z" fill="#e8b84a"/><path d="M0 5H17V14H0Z" fill="#f7d774"/><rect x="4" y="9" width="9" height="5" fill="#5ab0e8"/><rect x="6.5" y="11.5" width="4" height="2.5" fill="#f7d774"/></svg>
<svg style="left:122px;top:1047px" width="15" height="18" viewBox="0 0 15 18"><path d="M4.5 5V3.5A3 3 0 0 1 10.5 3.5V5" fill="none" stroke="#fff" stroke-width="1.2"/><path d="M0.5 5H14.5V17.5H0.5Z" fill="#fff"/><path d="M3.5 8.2L7 7.7V11H3.5ZM7.8 7.6L11.5 7V11H7.8ZM3.5 11.8H7V15.1L3.5 14.6ZM7.8 11.8H11.5V15.8L7.8 15.2Z" fill="#0a1016"/></svg>
<svg style="left:158px;top:1049px" width="17" height="17" viewBox="0 0 17 17"><rect x="0.5" y="0.5" width="16" height="16" rx="2" fill="#1c7fd0" stroke="#0b4f94"/><path d="M8 3C11 3 12 6 11.5 9L14 14H4C5 10 4 8 5 5.5C5.5 4 6.5 3 8 3Z" fill="#0b2a55"/><path d="M7 8C9 7.5 10.5 9.5 10.5 14H6C6 11.5 6 9.5 7 8Z" fill="#dff0ff"/><path d="M9 6L12.5 7.2L9 7.8Z" fill="#f5c23a"/></svg>
<svg style="left:196px;top:1049px" width="16" height="16" viewBox="0 0 16 16"><circle cx="8" cy="8" r="7.6" fill="#fff"/><path d="M8 8L8 0.4A7.6 7.6 0 0 1 14.6 4.2Z" fill="#f5b400"/><path d="M8 8L14.6 4.2A7.6 7.6 0 0 1 14.6 11.8Z" fill="#f26322"/><path d="M8 8L14.6 11.8A7.6 7.6 0 0 1 8 15.6Z" fill="#e02a6b"/><path d="M8 8L8 15.6A7.6 7.6 0 0 1 1.4 11.8Z" fill="#7b3fc0"/><path d="M8 8L1.4 11.8A7.6 7.6 0 0 1 1.4 4.2Z" fill="#2a8de0"/><path d="M8 8L1.4 4.2A7.6 7.6 0 0 1 8 0.4Z" fill="#46b83c"/><circle cx="8" cy="8" r="2.2" fill="#fff"/></svg>
<svg style="left:231px;top:1048px" width="18" height="18" viewBox="0 0 18 18"><path d="M1 13.5C5 16.5 14 14.5 17 7.5C16 12.5 10 17.5 2.5 15.5Z" fill="#e9b84a"/><path d="M3 3.5L12.5 2.5L7.5 14.5Z" fill="#2a78d8"/><path d="M5.5 5L10.5 4.4L7.6 11Z" fill="#dfeaf8"/><path d="M1.5 0.8H9L6 6.5Z" fill="#e0283a"/><path d="M12.5 2.5L15.5 5.5L9.5 10Z" fill="#1c4fa8"/></svg>
<svg style="left:269px;top:1049px" width="17" height="16" viewBox="0 0 17 16"><rect x="1.5" y="1" width="14" height="4" fill="#dfe6ee"/><path d="M2 2H3.5M5 2H6.5M8 2H9.5M11 2H12.5M14 2H15" stroke="#37516e" stroke-width="1.4"/><rect x="0.5" y="4.5" width="14" height="10" fill="#5c8cc8" stroke="#2c548c"/><circle cx="11.5" cy="11" r="4.2" fill="#2a7fe0" stroke="#cfe4ff" stroke-width="0.8"/><path d="M10.3 8.8L13.8 11L10.3 13.2Z" fill="#fff"/></svg>
<svg style="left:306px;top:1049px" width="17" height="17" viewBox="0 0 17 17"><rect x="0.5" y="0.5" width="16" height="16" fill="#8f979c" stroke="#b7bdc1"/><circle cx="6" cy="6" r="2.6" fill="none" stroke="#fff" stroke-width="1.5"/><path d="M3 13C6 14 9 12 11 9L14 5" fill="none" stroke="#1c2a38" stroke-width="1.4"/><circle cx="13.5" cy="4.5" r="1.6" fill="#1c2a38"/></svg>
<svg style="left:343px;top:1049px" width="16" height="16" viewBox="0 0 16 16"><circle cx="8" cy="8" r="7.7" fill="#2a5fa8"/><circle cx="6.5" cy="5.5" r="5" fill="#4b86cf" fill-opacity="0.7"/><path d="M11.5 3.5C8 2.5 5 4.5 6.5 7C8 9 11.5 9.2 10.8 11.8C10 14 5.5 13.5 3.5 11.5" fill="none" stroke="#e8f1fc" stroke-width="1.7" stroke-linecap="round"/></svg>
<svg style="left:380px;top:1048px" width="17" height="18" viewBox="0 0 17 18"><path d="M1 4L9 1.5L16 4V13L9 16.5L1 13Z" fill="#c7d3df"/><path d="M1 4L9 6.5V16.5L1 13Z" fill="#8fa3b8"/><path d="M9 6.5L16 4V13L9 16.5Z" fill="#3a9be0"/><rect x="3" y="6.5" width="2" height="6" fill="#e89a30"/><rect x="5.6" y="7.3" width="2" height="6" fill="#f0c860"/></svg>
<svg style="left:417px;top:1049px" width="16" height="16" viewBox="0 0 16 16"><rect x="0" y="0" width="16" height="16" rx="3.2" fill="#f27a33"/><path d="M3.5 12.5V4.5H11A2.1 2.1 0 0 1 11 8.8H3.5" fill="none" stroke="#fff" stroke-width="1.3"/></svg>
<svg style="left:454px;top:1049px" width="16" height="16" viewBox="0 0 16 16"><rect x="0" y="0" width="16" height="16" fill="#05090c"/><rect x="1" y="1" width="14" height="14" fill="#0a7ab6"/><path d="M1 1H6L3 5L2 9H1Z" fill="#5f8a92"/><path d="M10 1H15V3.5Z" fill="#a8e4f6"/><rect x="1" y="9" width="5" height="6" fill="#c6e6fb"/><rect x="9" y="9" width="3.6" height="6" fill="#03060f"/><rect x="12.6" y="9" width="2.4" height="6" fill="#2a7a96"/></svg>
<svg style="left:1476px;top:1046px" width="22" height="23" viewBox="0 0 22 23"><path d="M5 14.5A4.2 4.2 0 0 1 4.8 6.2A6.3 6.3 0 0 1 16.6 6.2A4.2 4.2 0 0 1 17 14.5Z" fill="#fff"/><path d="M6.5 17V21.5M10.5 17V21.5M14.5 17V21.5" stroke="#fff" stroke-width="1.1"/></svg>
<div class="t" style="left:1504px;top:1052px;color:#fff;font-size:11.5px;letter-spacing:-0.6px">24°C</div>
<svg style="left:1539px;top:1049px" width="17" height="17" viewBox="0 0 17 17"><rect x="0.5" y="0.5" width="15" height="15" rx="2" fill="#3e86e0"/><ellipse cx="8" cy="10" rx="3.6" ry="3" fill="#fff"/><circle cx="4" cy="6.5" r="1.5" fill="#fff"/><circle cx="8" cy="4.5" r="1.6" fill="#fff"/><circle cx="12" cy="6.5" r="1.5" fill="#fff"/><circle cx="12.5" cy="12.5" r="4" fill="#e84a3a"/><rect x="10.3" y="12" width="4.4" height="1.2" fill="#fff"/></svg>
<svg style="left:1562px;top:1049px" width="17" height="17" viewBox="0 0 16 16"><circle cx="8" cy="8" r="7.7" fill="#2a5fa8"/><circle cx="6.5" cy="5.5" r="5" fill="#4b86cf" fill-opacity="0.7"/><path d="M11.5 3.5C8 2.5 5 4.5 6.5 7C8 9 11.5 9.2 10.8 11.8C10 14 5.5 13.5 3.5 11.5" fill="none" stroke="#e8f1fc" stroke-width="1.7" stroke-linecap="round"/></svg>
<svg style="left:1587px;top:1050px" width="17" height="15" viewBox="0 0 17 15"><rect x="0.3" y="1.5" width="12" height="12" rx="5" fill="#e9eef6"/><path d="M11.5 6L16.5 3V12L11.5 9.2Z" fill="#5d9be0"/><rect x="3.3" y="4.2" width="6" height="6.6" rx="1" fill="#5d8fd0"/><rect x="4.6" y="5.6" width="3.4" height="3.8" fill="#e4493c"/></svg>
<svg style="left:1611px;top:1049px" width="16" height="17" viewBox="0 0 16 17"><path d="M0.5 5.5H4L9.5 0.8V16.2L4 11.5H0.5Z" fill="#e2512e"/><path d="M12 4.5V12.5" stroke="#7a2a16" stroke-width="1.2"/></svg>
<svg style="left:1635px;top:1049px" width="16" height="17" viewBox="0 0 16 17"><path d="M8 0.5L15.5 3V8C15.5 12 12 15 8 16.5C4 15 0.5 12 0.5 8V3Z" fill="#2f8be8"/><path d="M3 5.2L8 7.5L13 5.2C13 8 11.5 11.5 8 12.7C4.5 11.5 3 8 3 5.2Z" fill="none" stroke="#fff" stroke-width="1.5"/></svg>
<svg style="left:1659px;top:1049px" width="16" height="16" viewBox="0 0 16 16"><rect x="0" y="0" width="16" height="16" fill="#3f74c8"/><path d="M1.5 1V15M14.5 1V15" stroke="#bcd2f2" stroke-width="1.6" stroke-dasharray="2 1.4"/><rect x="4" y="2.5" width="8" height="4" fill="#9fc0ee"/><rect x="4" y="9" width="8" height="4.5" fill="#9fc0ee"/></svg>
<svg style="left:1682px;top:1049px" width="18" height="16" viewBox="0 0 18 16" fill="none" stroke="#fff"><path d="M1 5.5H3.5L7.5 2V14L3.5 10.5H1Z" stroke-width="1.2"/><path d="M10 5.5C11 7 11 9 10 10.5M12.5 3.5C14.3 6 14.3 10 12.5 12.5M15 1.8C17.6 5.5 17.6 10.5 15 14.2" stroke-width="1.1"/></svg>
<svg style="left:1706px;top:1050px" width="18" height="15" viewBox="0 0 18 15" fill="none" stroke="#fff" stroke-width="1.3"><rect x="4.6" y="1" width="12.6" height="9"/><path d="M8 14H14M11 10V14"/><rect x="0.7" y="3" width="3" height="10" fill="#0a1016"/></svg>
<svg style="left:1731px;top:1049px" width="17" height="17" viewBox="0 0 17 17"><rect x="0" y="0" width="17" height="17" rx="2" fill="#2a86e2"/><path d="M3 7C4.5 5.5 6 6 6.5 7.5C7.5 11 9.5 12.5 11.5 9V4.5M9.3 6.5L11.5 3.5L13.7 6.5" fill="none" stroke="#fff" stroke-width="1.6"/></svg>
<svg style="left:1754px;top:1049px" width="17" height="18" viewBox="0 0 17 18"><path d="M0.5 0.5H16.5V12.5H10.5L8.5 15.5L6.5 12.5H0.5Z" fill="#fff"/><path d="M3 4H14M3 6.7H14M3 9.4H10" stroke="#0a1016" stroke-width="1.1"/></svg>
<div class="t" style="left:1779px;top:1050px;color:#fff;font-size:13px;line-height:14px;font-weight:bold"><i>英</i></div>
<svg style="left:1805px;top:1047px" width="20" height="20" viewBox="0 0 30 30"><g transform="rotate(-14 15 15)"><rect x="3" y="3.5" width="23" height="23" rx="2.5" fill="#e8612d"/><path d="M20.5 10.5C17 7.5 9 8.5 9 12.5C9 16.5 21 14 21 18.5C21 22.5 12 23 8.5 20" fill="none" stroke="#fff" stroke-width="3.6" stroke-linecap="round"/></g></svg>
<div class="t" style="left:1848px;top:1050px;color:#fff;font-size:12px"><i>下</i><i>午</i> 9:41</div>
<div class="a" style="left:1914px;top:1042px;width:1px;height:30px;background:#5a5f64"></div>
</div></body></html>
